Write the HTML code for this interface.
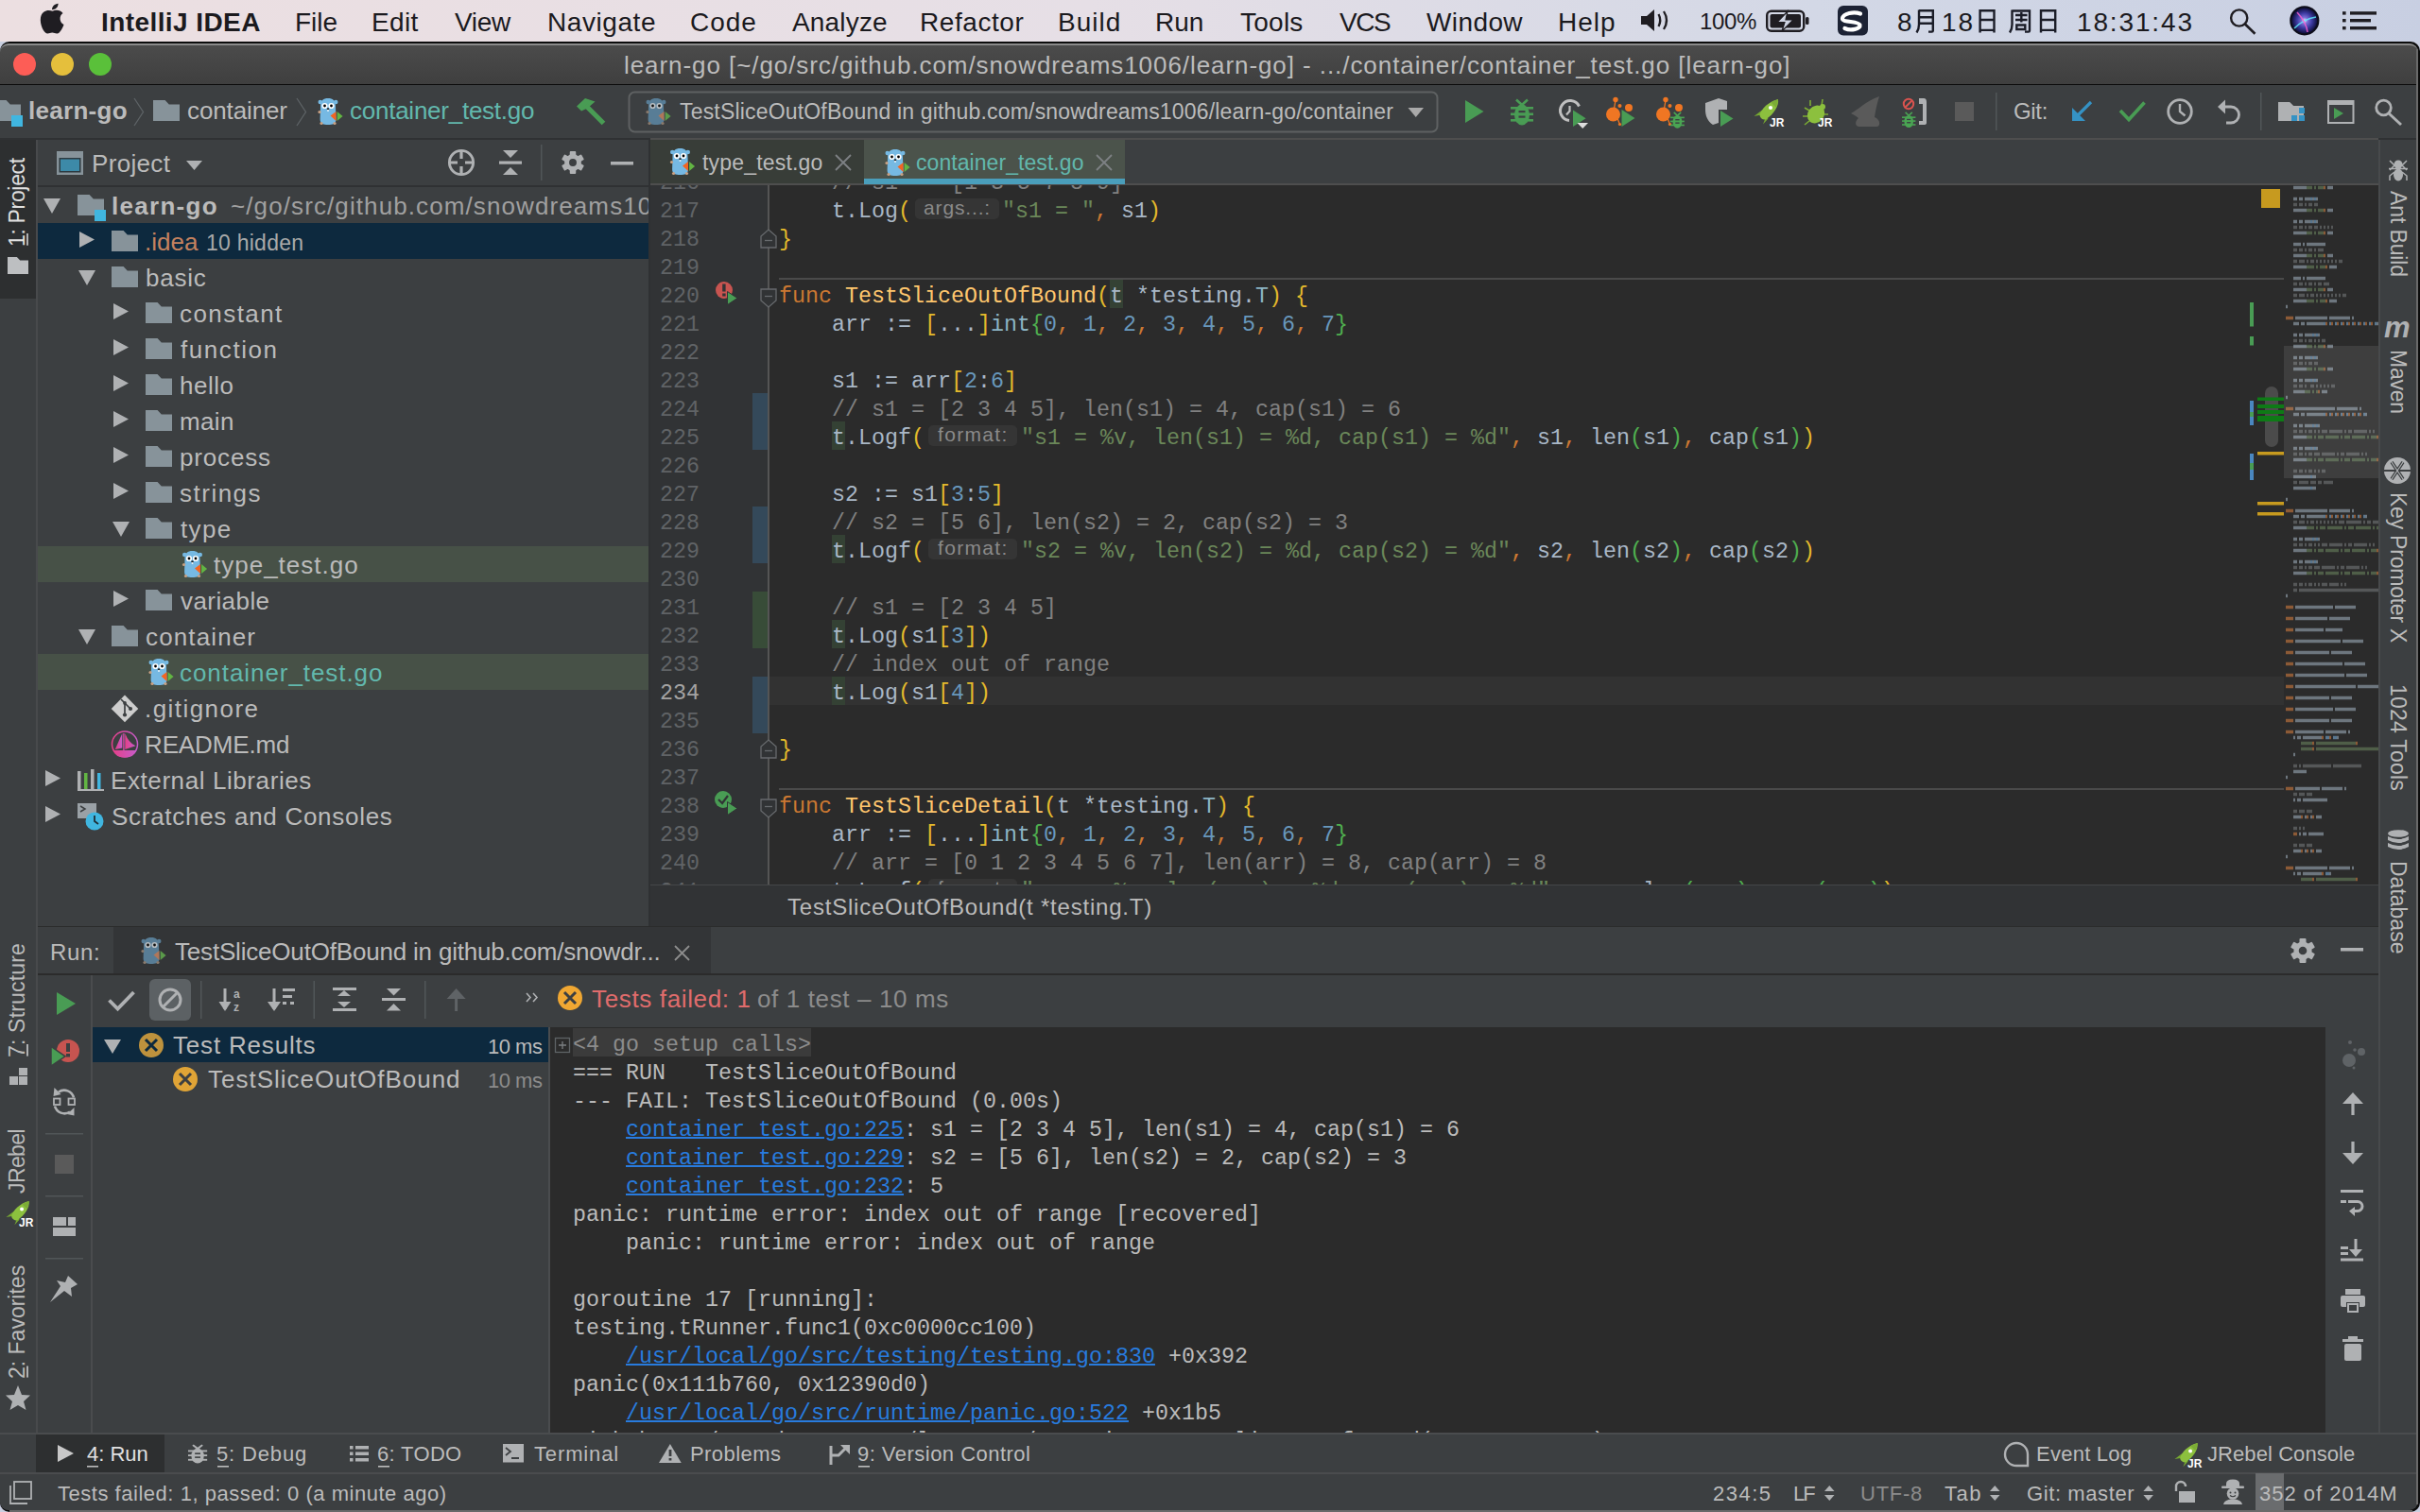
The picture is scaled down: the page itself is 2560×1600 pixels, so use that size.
<!DOCTYPE html><html><head><meta charset="utf-8"><style>
html,body{margin:0;padding:0;background:#c9cfe0;width:2560px;height:1600px;overflow:hidden}
#r{position:relative;width:2560px;height:1600px;overflow:hidden;-webkit-font-smoothing:antialiased}
#r div,#r svg{position:absolute}
</style></head><body><div id="r">
<div style="left:0px;top:0px;width:2560px;height:44px;background:linear-gradient(90deg,#ecdfe1 0%,#e6dfe6 45%,#d3d8e6 75%,#c8cfe2 100%);"></div>
<div style="left:0px;top:44px;width:2560px;height:1556px;background:#0c0c0c;border-radius:10px 10px 10px 10px;"></div>
<div style="left:0px;top:46px;width:2558px;height:1552px;background:#3c3f41;border-radius:9px 9px 9px 9px;"></div>
<div style="left:0px;top:46px;width:2558px;height:43px;background:linear-gradient(#4b4b4b,#3f3f3f);border-radius:9px 9px 0 0;border-top:2px solid #8a8a8a;box-sizing:border-box"></div>
<div style="left:0px;top:89px;width:2558px;height:1px;background:#0b0b0b;"></div>
<div style="left:0px;top:90px;width:2556px;height:56px;background:#3c3f41;"></div>
<div style="left:0px;top:146px;width:2556px;height:2px;background:#2f3133;"></div>
<div style="left:688px;top:146px;width:1828px;height:2px;background:#4e4e4e;"></div>
<div style="left:0px;top:148px;width:38px;height:1368px;background:#3c3f41;"></div>
<div style="left:38px;top:148px;width:2px;height:1368px;background:#484a4c;"></div>
<div style="left:0px;top:148px;width:38px;height:168px;background:#2d2f30;"></div>
<div style="left:40px;top:148px;width:646px;height:832px;background:#3c3f41;"></div>
<div style="left:40px;top:196px;width:646px;height:2px;background:#2f3133;"></div>
<div style="left:688px;top:148px;width:1828px;height:46px;background:#3c3f41;"></div>
<div style="left:688px;top:194px;width:1828px;height:2px;background:#4e4e4e;"></div>
<div style="left:688px;top:196px;width:1728px;height:740px;background:#2b2b2b;"></div>
<div style="left:688px;top:196px;width:124px;height:740px;background:#313335;"></div>
<div style="left:812px;top:196px;width:2px;height:740px;background:#555555;"></div>
<div style="left:2416px;top:196px;width:100px;height:740px;background:#2b2b2b;"></div>
<div style="left:688px;top:936px;width:1828px;height:44px;background:#313335;"></div>
<div style="left:688px;top:936px;width:1828px;height:1px;background:#454749;"></div>
<div style="left:686px;top:148px;width:2px;height:832px;background:#2f3133;"></div>
<div style="left:2516px;top:148px;width:2px;height:1368px;background:#484a4c;"></div>
<div style="left:2518px;top:148px;width:38px;height:1368px;background:#3c3f41;"></div>
<div style="left:40px;top:980px;width:2476px;height:1px;background:#2b2b2b;"></div>
<div style="left:40px;top:981px;width:2476px;height:49px;background:#3c3f41;"></div>
<div style="left:120px;top:981px;width:632px;height:49px;background:#333537;"></div>
<div style="left:40px;top:1030px;width:2476px;height:2px;background:#2b2b2b;"></div>
<div style="left:40px;top:1032px;width:56px;height:484px;background:#3c3f41;"></div>
<div style="left:96px;top:1032px;width:2px;height:484px;background:#4a4c4e;"></div>
<div style="left:98px;top:1032px;width:2418px;height:55px;background:#3c3f41;"></div>
<div style="left:98px;top:1087px;width:482px;height:429px;background:#3c3f41;"></div>
<div style="left:580px;top:1087px;width:2px;height:429px;background:#4a4c4e;"></div>
<div style="left:582px;top:1087px;width:1878px;height:429px;background:#2b2b2b;"></div>
<div style="left:2460px;top:1087px;width:56px;height:429px;background:#3c3f41;"></div>
<div style="left:0px;top:1516px;width:2556px;height:2px;background:#4a4c4e;"></div>
<div style="left:0px;top:1518px;width:2556px;height:40px;background:#3c3f41;"></div>
<div style="left:38px;top:1518px;width:136px;height:40px;background:#2d2f30;"></div>
<div style="left:0px;top:1558px;width:2556px;height:2px;background:#4a4c4e;"></div>
<div style="left:0px;top:1560px;width:2556px;height:38px;background:#3c3f41;border-radius:0 0 9px 9px"></div>
<div style="left:2386px;top:1559px;width:30px;height:39px;background:#6a6c6e;"></div>
<div style="left:2556px;top:52px;width:2px;height:1540px;background:#6a6a6a;"></div>
<div style="left:10px;top:1598px;width:2542px;height:2px;background:#6a6a6a;"></div>
<div style="left:107px;top:10px;font:700 28px/28px 'Liberation Sans';color:#1b1a1e;letter-spacing:0.417px;white-space:pre;">IntelliJ IDEA</div>
<div style="left:312px;top:10px;font:400 28px/28px 'Liberation Sans';color:#1b1a1e;white-space:pre;">File</div>
<div style="left:393px;top:10px;font:400 28px/28px 'Liberation Sans';color:#1b1a1e;letter-spacing:0.333px;white-space:pre;">Edit</div>
<div style="left:481px;top:10px;font:400 28px/28px 'Liberation Sans';color:#1b1a1e;letter-spacing:-0.333px;white-space:pre;">View</div>
<div style="left:579px;top:10px;font:400 28px/28px 'Liberation Sans';color:#1b1a1e;letter-spacing:0.571px;white-space:pre;">Navigate</div>
<div style="left:730px;top:10px;font:400 28px/28px 'Liberation Sans';color:#1b1a1e;letter-spacing:1.000px;white-space:pre;">Code</div>
<div style="left:838px;top:10px;font:400 28px/28px 'Liberation Sans';color:#1b1a1e;letter-spacing:0.167px;white-space:pre;">Analyze</div>
<div style="left:973px;top:10px;font:400 28px/28px 'Liberation Sans';color:#1b1a1e;letter-spacing:0.571px;white-space:pre;">Refactor</div>
<div style="left:1119px;top:10px;font:400 28px/28px 'Liberation Sans';color:#1b1a1e;letter-spacing:1.000px;white-space:pre;">Build</div>
<div style="left:1222px;top:10px;font:400 28px/28px 'Liberation Sans';color:#1b1a1e;white-space:pre;">Run</div>
<div style="left:1312px;top:10px;font:400 28px/28px 'Liberation Sans';color:#1b1a1e;letter-spacing:0.250px;white-space:pre;">Tools</div>
<div style="left:1417px;top:10px;font:400 28px/28px 'Liberation Sans';color:#1b1a1e;letter-spacing:-1.500px;white-space:pre;">VCS</div>
<div style="left:1509px;top:10px;font:400 28px/28px 'Liberation Sans';color:#1b1a1e;letter-spacing:0.400px;white-space:pre;">Window</div>
<div style="left:1648px;top:10px;font:400 28px/28px 'Liberation Sans';color:#1b1a1e;letter-spacing:1.000px;white-space:pre;">Help</div>
<div style="left:2197px;top:10px;font:400 28px/28px 'Liberation Sans';color:#1b1a1e;letter-spacing:1.857px;white-space:pre;">18:31:43</div>
<div style="left:2007px;top:10px;font:400 28px/28px 'Liberation Sans';color:#1b1a1e;white-space:pre;">8</div>
<div style="left:1798px;top:11px;font:400 24px/24px 'Liberation Sans';color:#1b1a1e;letter-spacing:-0.333px;white-space:pre;">100%</div>
<div style="left:2054px;top:10px;font:400 28px/28px 'Liberation Sans';color:#1b1a1e;letter-spacing:2.000px;white-space:pre;">18</div>
<div style="left:660px;top:56px;font:400 26px/26px 'Liberation Sans';color:#bcbcbc;letter-spacing:0.929px;white-space:pre;">learn-go [~/go/src/github.com/snowdreams1006/learn-go] - .../container/container_test.go [learn-go]</div>
<div style="left:30px;top:104px;font:700 26px/26px 'Liberation Sans';color:#bbbbbb;letter-spacing:0.286px;white-space:pre;">learn-go</div>
<div style="left:198px;top:104px;font:400 26px/26px 'Liberation Sans';color:#bbbbbb;letter-spacing:-0.125px;white-space:pre;">container</div>
<div style="left:370px;top:104px;font:400 26px/26px 'Liberation Sans';color:#62b8ad;letter-spacing:-0.250px;white-space:pre;">container_test.go</div>
<div style="left:719px;top:107px;font:400 23px/23px 'Liberation Sans';color:#bbbbbb;letter-spacing:0.182px;white-space:pre;">TestSliceOutOfBound in github.com/snowdreams1006/learn-go/container</div>
<div style="left:2130px;top:106px;font:400 24px/24px 'Liberation Sans';color:#bbbbbb;letter-spacing:-0.333px;white-space:pre;">Git:</div>
<div style="left:97px;top:160px;font:400 26px/26px 'Liberation Sans';color:#bbbbbb;letter-spacing:0.333px;white-space:pre;">Project</div>
<div style="left:40px;top:197px;width:646px;height:783px;overflow:hidden"><div style="left:-40px;top:-197px;width:2560px;height:1600px">
<div style="left:40px;top:236px;width:646px;height:38px;background:#0d293e;"></div>
<div style="left:40px;top:578px;width:646px;height:38px;background:#475147;"></div>
<div style="left:40px;top:692px;width:646px;height:38px;background:#475147;"></div>
<div style="left:118px;top:205px;font:700 26px/26px 'Liberation Sans';color:#bbbbbb;letter-spacing:1.286px;white-space:pre;">learn-go</div>
<div style="left:153px;top:243px;font:400 26px/26px 'Liberation Sans';color:#c5825f;white-space:pre;">.idea</div>
<div style="left:154px;top:281px;font:400 26px/26px 'Liberation Sans';color:#bbbbbb;letter-spacing:0.750px;white-space:pre;">basic</div>
<div style="left:190px;top:319px;font:400 26px/26px 'Liberation Sans';color:#bbbbbb;letter-spacing:1.429px;white-space:pre;">constant</div>
<div style="left:191px;top:357px;font:400 26px/26px 'Liberation Sans';color:#bbbbbb;letter-spacing:1.571px;white-space:pre;">function</div>
<div style="left:190px;top:395px;font:400 26px/26px 'Liberation Sans';color:#bbbbbb;letter-spacing:0.500px;white-space:pre;">hello</div>
<div style="left:190px;top:433px;font:400 26px/26px 'Liberation Sans';color:#bbbbbb;letter-spacing:0.333px;white-space:pre;">main</div>
<div style="left:190px;top:471px;font:400 26px/26px 'Liberation Sans';color:#bbbbbb;letter-spacing:0.833px;white-space:pre;">process</div>
<div style="left:190px;top:509px;font:400 26px/26px 'Liberation Sans';color:#bbbbbb;letter-spacing:1.500px;white-space:pre;">strings</div>
<div style="left:191px;top:547px;font:400 26px/26px 'Liberation Sans';color:#bbbbbb;letter-spacing:1.333px;white-space:pre;">type</div>
<div style="left:226px;top:585px;font:400 26px/26px 'Liberation Sans';color:#bbbbbb;letter-spacing:1.000px;white-space:pre;">type_test.go</div>
<div style="left:191px;top:623px;font:400 26px/26px 'Liberation Sans';color:#bbbbbb;letter-spacing:0.429px;white-space:pre;">variable</div>
<div style="left:154px;top:661px;font:400 26px/26px 'Liberation Sans';color:#bbbbbb;letter-spacing:1.125px;white-space:pre;">container</div>
<div style="left:190px;top:699px;font:400 26px/26px 'Liberation Sans';color:#62b8ad;letter-spacing:0.938px;white-space:pre;">container_test.go</div>
<div style="left:153px;top:737px;font:400 26px/26px 'Liberation Sans';color:#bbbbbb;letter-spacing:1.444px;white-space:pre;">.gitignore</div>
<div style="left:153px;top:775px;font:400 26px/26px 'Liberation Sans';color:#bbbbbb;letter-spacing:-0.125px;white-space:pre;">README.md</div>
<div style="left:117px;top:813px;font:400 26px/26px 'Liberation Sans';color:#bbbbbb;letter-spacing:0.588px;white-space:pre;">External Libraries</div>
<div style="left:118px;top:851px;font:400 26px/26px 'Liberation Sans';color:#bbbbbb;letter-spacing:0.714px;white-space:pre;">Scratches and Consoles</div>
<div style="left:244px;top:205px;font:400 26px/26px 'Liberation Sans';color:#a0a0a0;letter-spacing:1.100px;white-space:pre;">~/go/src/github.com/snowdreams1006/learn-go</div>
<div style="left:218px;top:246px;font:400 23px/23px 'Liberation Sans';color:#a9a9a9;letter-spacing:0.250px;white-space:pre;">10 hidden</div>
</div></div>
<div style="left:688px;top:148px;width:226px;height:46px;background:#383d38;"></div>
<div style="left:914px;top:148px;width:276px;height:46px;background:#4b534b;"></div>
<div style="left:914px;top:189px;width:276px;height:6px;background:#4a9ebb;"></div>
<div style="left:743px;top:161px;font:400 23px/23px 'Liberation Sans';color:#bbbbbb;letter-spacing:0.182px;white-space:pre;">type_test.go</div>
<div style="left:969px;top:161px;font:400 23px/23px 'Liberation Sans';color:#62b8ad;letter-spacing:0.062px;white-space:pre;">container_test.go</div>
<div style="left:833px;top:948px;font:400 24px/24px 'Liberation Sans';color:#bbbbbb;letter-spacing:0.781px;white-space:pre;">TestSliceOutOfBound(t *testing.T)</div>
<div style="left:53px;top:996px;font:400 24px/24px 'Liberation Sans';color:#bbbbbb;letter-spacing:0.667px;white-space:pre;">Run:</div>
<div style="left:185px;top:994px;font:400 26px/26px 'Liberation Sans';color:#bbbbbb;letter-spacing:-0.190px;white-space:pre;">TestSliceOutOfBound in github.com/snowdr...</div>
<div style="left:626px;top:1044px;font:400 26px/26px 'Liberation Sans';color:#e06c6c;letter-spacing:0.643px;white-space:pre;">Tests failed: 1</div>
<div style="left:801px;top:1044px;font:400 26px/26px 'Liberation Sans';color:#8c8c8c;letter-spacing:0.625px;white-space:pre;">of 1 test – 10 ms</div>
<div style="left:98px;top:1087px;width:482px;height:37px;background:#0d293e;"></div>
<div style="left:183px;top:1093px;font:400 26px/26px 'Liberation Sans';color:#bbbbbb;letter-spacing:0.818px;white-space:pre;">Test Results</div>
<div style="left:516px;top:1097px;font:400 22px/22px 'Liberation Sans';color:#bbbbbb;letter-spacing:-0.500px;white-space:pre;">10 ms</div>
<div style="left:220px;top:1129px;font:400 26px/26px 'Liberation Sans';color:#bbbbbb;letter-spacing:1.000px;white-space:pre;">TestSliceOutOfBound</div>
<div style="left:516px;top:1133px;font:400 22px/22px 'Liberation Sans';color:#8c8c8c;letter-spacing:-0.500px;white-space:pre;">10 ms</div>
<div style="left:92px;top:1528px;font:400 22px/22px 'Liberation Sans';color:#e0e0e0;white-space:pre;">4: Run</div>
<div style="left:229px;top:1528px;font:400 22px/22px 'Liberation Sans';color:#bbbbbb;letter-spacing:0.857px;white-space:pre;">5: Debug</div>
<div style="left:399px;top:1528px;font:400 22px/22px 'Liberation Sans';color:#bbbbbb;letter-spacing:0.333px;white-space:pre;">6: TODO</div>
<div style="left:565px;top:1528px;font:400 22px/22px 'Liberation Sans';color:#bbbbbb;letter-spacing:0.857px;white-space:pre;">Terminal</div>
<div style="left:730px;top:1528px;font:400 22px/22px 'Liberation Sans';color:#bbbbbb;letter-spacing:0.429px;white-space:pre;">Problems</div>
<div style="left:907px;top:1528px;font:400 22px/22px 'Liberation Sans';color:#bbbbbb;letter-spacing:0.471px;white-space:pre;">9: Version Control</div>
<div style="left:2154px;top:1528px;font:400 22px/22px 'Liberation Sans';color:#bbbbbb;letter-spacing:0.250px;white-space:pre;">Event Log</div>
<div style="left:2335px;top:1528px;font:400 22px/22px 'Liberation Sans';color:#bbbbbb;letter-spacing:0.077px;white-space:pre;">JRebel Console</div>
<div style="left:61px;top:1570px;font:400 22px/22px 'Liberation Sans';color:#bbbbbb;letter-spacing:0.525px;white-space:pre;">Tests failed: 1, passed: 0 (a minute ago)</div>
<div style="left:1812px;top:1570px;font:400 22px/22px 'Liberation Sans';color:#bbbbbb;letter-spacing:1.500px;white-space:pre;">234:5</div>
<div style="left:1897px;top:1570px;font:400 22px/22px 'Liberation Sans';color:#bbbbbb;letter-spacing:-2.000px;white-space:pre;">LF</div>
<div style="left:1968px;top:1570px;font:400 22px/22px 'Liberation Sans';color:#8c8c8c;letter-spacing:0.750px;white-space:pre;">UTF-8</div>
<div style="left:2057px;top:1570px;font:400 22px/22px 'Liberation Sans';color:#bbbbbb;letter-spacing:1.500px;white-space:pre;">Tab</div>
<div style="left:2144px;top:1570px;font:400 22px/22px 'Liberation Sans';color:#bbbbbb;letter-spacing:0.600px;white-space:pre;">Git: master</div>
<div style="left:2390px;top:1570px;font:400 22px/22px 'Liberation Sans';color:#bbbbbb;letter-spacing:1.000px;white-space:pre;">352 of 2014M</div>
<div style="left:7px;top:261px;font:400 23px/23px 'Liberation Sans';color:#e0e0e0;letter-spacing:-0.333px;white-space:pre;transform-origin:0 0;transform:rotate(-90deg);">1: Project</div>
<div style="left:7px;top:1119px;font:400 23px/23px 'Liberation Sans';color:#bbbbbb;letter-spacing:0.182px;white-space:pre;transform-origin:0 0;transform:rotate(-90deg);">7: Structure</div>
<div style="left:7px;top:1263px;font:400 23px/23px 'Liberation Sans';color:#bbbbbb;letter-spacing:-0.600px;white-space:pre;transform-origin:0 0;transform:rotate(-90deg);">JRebel</div>
<div style="left:7px;top:1459px;font:400 23px/23px 'Liberation Sans';color:#bbbbbb;white-space:pre;transform-origin:0 0;transform:rotate(-90deg);">2: Favorites</div>
<div style="left:2548px;top:202px;font:400 23px/23px 'Liberation Sans';color:#bbbbbb;letter-spacing:-0.125px;white-space:pre;transform-origin:0 0;transform:rotate(90deg);">Ant Build</div>
<div style="left:2548px;top:370px;font:400 23px/23px 'Liberation Sans';color:#bbbbbb;letter-spacing:-0.250px;white-space:pre;transform-origin:0 0;transform:rotate(90deg);">Maven</div>
<div style="left:2548px;top:521px;font:400 23px/23px 'Liberation Sans';color:#bbbbbb;letter-spacing:-0.231px;white-space:pre;transform-origin:0 0;transform:rotate(90deg);">Key Promoter X</div>
<div style="left:2548px;top:724px;font:400 23px/23px 'Liberation Sans';color:#bbbbbb;letter-spacing:0.222px;white-space:pre;transform-origin:0 0;transform:rotate(90deg);">1024 Tools</div>
<div style="left:2548px;top:911px;font:400 23px/23px 'Liberation Sans';color:#bbbbbb;white-space:pre;transform-origin:0 0;transform:rotate(90deg);">Database</div>
<div style="left:686px;top:196px;width:1730px;height:740px;overflow:hidden"><div style="left:-686px;top:-196px;width:2560px;height:1600px">
<div style="left:814px;top:716px;width:1602px;height:30px;background:#323232;"></div>
<div style="left:1174px;top:296px;width:14px;height:30px;background:#344134;"></div>
<div style="left:880px;top:446px;width:14px;height:30px;background:#344134;"></div>
<div style="left:880px;top:566px;width:14px;height:30px;background:#344134;"></div>
<div style="left:880px;top:656px;width:14px;height:30px;background:#344134;"></div>
<div style="left:880px;top:716px;width:14px;height:30px;background:#344134;"></div>
<div style="left:824px;top:294px;width:1592px;height:2px;background:#4a4a4a;"></div>
<div style="left:824px;top:834px;width:1592px;height:2px;background:#4a4a4a;"></div>
<div style="left:824px;top:183px;font:400 23.333px/23.333px 'Liberation Mono';white-space:pre;"><span style="color:#808080">    // s1 =  [1 3 5 7 8 9]</span></div>
<div style="left:824px;top:243px;font:400 23.333px/23.333px 'Liberation Mono';white-space:pre;"><span style="color:#e3b92c">}</span></div>
<div style="left:824px;top:303px;font:400 23.333px/23.333px 'Liberation Mono';white-space:pre;"><span style="color:#cc7832">func</span><span style="color:#a9b7c6"> </span><span style="color:#ffc66d">TestSliceOutOfBound</span><span style="color:#e3b92c">(</span><span style="color:#a9b7c6">t *testing.</span><span style="color:#8cb4c4">T</span><span style="color:#e3b92c">)</span><span style="color:#a9b7c6"> </span><span style="color:#e3b92c">{</span></div>
<div style="left:824px;top:333px;font:400 23.333px/23.333px 'Liberation Mono';white-space:pre;"><span style="color:#a9b7c6">    arr := </span><span style="color:#e3b92c">[</span><span style="color:#a9b7c6">...</span><span style="color:#e3b92c">]</span><span style="color:#8cb4c4">int</span><span style="color:#4fae4f">{</span><span style="color:#6897bb">0</span><span style="color:#cc7832">,</span><span style="color:#a9b7c6"> </span><span style="color:#6897bb">1</span><span style="color:#cc7832">,</span><span style="color:#a9b7c6"> </span><span style="color:#6897bb">2</span><span style="color:#cc7832">,</span><span style="color:#a9b7c6"> </span><span style="color:#6897bb">3</span><span style="color:#cc7832">,</span><span style="color:#a9b7c6"> </span><span style="color:#6897bb">4</span><span style="color:#cc7832">,</span><span style="color:#a9b7c6"> </span><span style="color:#6897bb">5</span><span style="color:#cc7832">,</span><span style="color:#a9b7c6"> </span><span style="color:#6897bb">6</span><span style="color:#cc7832">,</span><span style="color:#a9b7c6"> </span><span style="color:#6897bb">7</span><span style="color:#4fae4f">}</span></div>
<div style="left:824px;top:393px;font:400 23.333px/23.333px 'Liberation Mono';white-space:pre;"><span style="color:#a9b7c6">    s1 := arr</span><span style="color:#e3b92c">[</span><span style="color:#6897bb">2</span><span style="color:#a9b7c6">:</span><span style="color:#6897bb">6</span><span style="color:#e3b92c">]</span></div>
<div style="left:824px;top:423px;font:400 23.333px/23.333px 'Liberation Mono';white-space:pre;"><span style="color:#808080">    // s1 = [2 3 4 5], len(s1) = 4, cap(s1) = 6</span></div>
<div style="left:824px;top:513px;font:400 23.333px/23.333px 'Liberation Mono';white-space:pre;"><span style="color:#a9b7c6">    s2 := s1</span><span style="color:#e3b92c">[</span><span style="color:#6897bb">3</span><span style="color:#a9b7c6">:</span><span style="color:#6897bb">5</span><span style="color:#e3b92c">]</span></div>
<div style="left:824px;top:543px;font:400 23.333px/23.333px 'Liberation Mono';white-space:pre;"><span style="color:#808080">    // s2 = [5 6], len(s2) = 2, cap(s2) = 3</span></div>
<div style="left:824px;top:633px;font:400 23.333px/23.333px 'Liberation Mono';white-space:pre;"><span style="color:#808080">    // s1 = [2 3 4 5]</span></div>
<div style="left:824px;top:663px;font:400 23.333px/23.333px 'Liberation Mono';white-space:pre;"><span style="color:#a9b7c6">    t.Log</span><span style="color:#e3b92c">(</span><span style="color:#a9b7c6">s1</span><span style="color:#e3b92c">[</span><span style="color:#6897bb">3</span><span style="color:#e3b92c">]</span><span style="color:#e3b92c">)</span></div>
<div style="left:824px;top:693px;font:400 23.333px/23.333px 'Liberation Mono';white-space:pre;"><span style="color:#808080">    // index out of range</span></div>
<div style="left:824px;top:723px;font:400 23.333px/23.333px 'Liberation Mono';white-space:pre;"><span style="color:#a9b7c6">    t.Log</span><span style="color:#e3b92c">(</span><span style="color:#a9b7c6">s1</span><span style="color:#e3b92c">[</span><span style="color:#6897bb">4</span><span style="color:#e3b92c">]</span><span style="color:#e3b92c">)</span></div>
<div style="left:824px;top:783px;font:400 23.333px/23.333px 'Liberation Mono';white-space:pre;"><span style="color:#e3b92c">}</span></div>
<div style="left:824px;top:843px;font:400 23.333px/23.333px 'Liberation Mono';white-space:pre;"><span style="color:#cc7832">func</span><span style="color:#a9b7c6"> </span><span style="color:#ffc66d">TestSliceDetail</span><span style="color:#e3b92c">(</span><span style="color:#a9b7c6">t *testing.</span><span style="color:#8cb4c4">T</span><span style="color:#e3b92c">)</span><span style="color:#a9b7c6"> </span><span style="color:#e3b92c">{</span></div>
<div style="left:824px;top:873px;font:400 23.333px/23.333px 'Liberation Mono';white-space:pre;"><span style="color:#a9b7c6">    arr := </span><span style="color:#e3b92c">[</span><span style="color:#a9b7c6">...</span><span style="color:#e3b92c">]</span><span style="color:#8cb4c4">int</span><span style="color:#4fae4f">{</span><span style="color:#6897bb">0</span><span style="color:#cc7832">,</span><span style="color:#a9b7c6"> </span><span style="color:#6897bb">1</span><span style="color:#cc7832">,</span><span style="color:#a9b7c6"> </span><span style="color:#6897bb">2</span><span style="color:#cc7832">,</span><span style="color:#a9b7c6"> </span><span style="color:#6897bb">3</span><span style="color:#cc7832">,</span><span style="color:#a9b7c6"> </span><span style="color:#6897bb">4</span><span style="color:#cc7832">,</span><span style="color:#a9b7c6"> </span><span style="color:#6897bb">5</span><span style="color:#cc7832">,</span><span style="color:#a9b7c6"> </span><span style="color:#6897bb">6</span><span style="color:#cc7832">,</span><span style="color:#a9b7c6"> </span><span style="color:#6897bb">7</span><span style="color:#4fae4f">}</span></div>
<div style="left:824px;top:903px;font:400 23.333px/23.333px 'Liberation Mono';white-space:pre;"><span style="color:#808080">    // arr = [0 1 2 3 4 5 6 7], len(arr) = 8, cap(arr) = 8</span></div>
<div style="left:824px;top:453px;font:400 23.333px/23.333px 'Liberation Mono';white-space:pre;"><span style="color:#a9b7c6">    t.Logf</span><span style="color:#e3b92c">(</span></div>
<div style="left:982px;top:450px;width:94px;height:22px;background:#353535;border-radius:5px"></div>
<div style="left:992px;top:449px;font:400 21px/21px 'Liberation Sans';color:#8a8a8a;letter-spacing:1.333px;white-space:pre;">format:</div>
<div style="left:1080px;top:453px;font:400 23.333px/23.333px 'Liberation Mono';white-space:pre;"><span style="color:#6a8759">&quot;s1 = %v, len(s1) = %d, cap(s1) = %d&quot;</span><span style="color:#cc7832">,</span><span style="color:#a9b7c6"> s1</span><span style="color:#cc7832">,</span><span style="color:#a9b7c6"> len</span><span style="color:#4fae4f">(</span><span style="color:#a9b7c6">s1</span><span style="color:#4fae4f">)</span><span style="color:#cc7832">,</span><span style="color:#a9b7c6"> cap</span><span style="color:#4fae4f">(</span><span style="color:#a9b7c6">s1</span><span style="color:#4fae4f">)</span><span style="color:#e3b92c">)</span></div>
<div style="left:824px;top:573px;font:400 23.333px/23.333px 'Liberation Mono';white-space:pre;"><span style="color:#a9b7c6">    t.Logf</span><span style="color:#e3b92c">(</span></div>
<div style="left:982px;top:570px;width:94px;height:22px;background:#353535;border-radius:5px"></div>
<div style="left:992px;top:569px;font:400 21px/21px 'Liberation Sans';color:#8a8a8a;letter-spacing:1.333px;white-space:pre;">format:</div>
<div style="left:1080px;top:573px;font:400 23.333px/23.333px 'Liberation Mono';white-space:pre;"><span style="color:#6a8759">&quot;s2 = %v, len(s2) = %d, cap(s2) = %d&quot;</span><span style="color:#cc7832">,</span><span style="color:#a9b7c6"> s2</span><span style="color:#cc7832">,</span><span style="color:#a9b7c6"> len</span><span style="color:#4fae4f">(</span><span style="color:#a9b7c6">s2</span><span style="color:#4fae4f">)</span><span style="color:#cc7832">,</span><span style="color:#a9b7c6"> cap</span><span style="color:#4fae4f">(</span><span style="color:#a9b7c6">s2</span><span style="color:#4fae4f">)</span><span style="color:#e3b92c">)</span></div>
<div style="left:824px;top:933px;font:400 23.333px/23.333px 'Liberation Mono';white-space:pre;"><span style="color:#a9b7c6">    t.Logf</span><span style="color:#e3b92c">(</span></div>
<div style="left:982px;top:930px;width:94px;height:22px;background:#353535;border-radius:5px"></div>
<div style="left:992px;top:929px;font:400 21px/21px 'Liberation Sans';color:#8a8a8a;letter-spacing:1.333px;white-space:pre;">format:</div>
<div style="left:1080px;top:933px;font:400 23.333px/23.333px 'Liberation Mono';white-space:pre;"><span style="color:#6a8759">&quot;arr = %v, len(arr) = %d, cap(arr) = %d&quot;</span><span style="color:#cc7832">,</span><span style="color:#a9b7c6"> arr</span><span style="color:#cc7832">,</span><span style="color:#a9b7c6"> len</span><span style="color:#4fae4f">(</span><span style="color:#a9b7c6">arr</span><span style="color:#4fae4f">)</span><span style="color:#cc7832">,</span><span style="color:#a9b7c6"> cap</span><span style="color:#4fae4f">(</span><span style="color:#a9b7c6">arr</span><span style="color:#4fae4f">)</span><span style="color:#e3b92c">)</span></div>
<div style="left:824px;top:213px;font:400 23.333px/23.333px 'Liberation Mono';white-space:pre;"><span style="color:#a9b7c6">    t.Log</span><span style="color:#e3b92c">(</span></div>
<div style="left:968px;top:210px;width:89px;height:22px;background:#353535;border-radius:5px"></div>
<div style="left:977px;top:209px;font:400 21px/21px 'Liberation Sans';color:#8a8a8a;letter-spacing:0.857px;white-space:pre;">args...:</div>
<div style="left:1060px;top:213px;font:400 23.333px/23.333px 'Liberation Mono';white-space:pre;"><span style="color:#6a8759">&quot;s1 = &quot;</span><span style="color:#cc7832">,</span><span style="color:#a9b7c6"> s1</span><span style="color:#e3b92c">)</span></div>
<div style="left:698px;top:183px;font:400 23.333px/23.333px 'Liberation Mono';color:#606366;white-space:pre">216</div>
<div style="left:698px;top:213px;font:400 23.333px/23.333px 'Liberation Mono';color:#606366;white-space:pre">217</div>
<div style="left:698px;top:243px;font:400 23.333px/23.333px 'Liberation Mono';color:#606366;white-space:pre">218</div>
<div style="left:698px;top:273px;font:400 23.333px/23.333px 'Liberation Mono';color:#606366;white-space:pre">219</div>
<div style="left:698px;top:303px;font:400 23.333px/23.333px 'Liberation Mono';color:#606366;white-space:pre">220</div>
<div style="left:698px;top:333px;font:400 23.333px/23.333px 'Liberation Mono';color:#606366;white-space:pre">221</div>
<div style="left:698px;top:363px;font:400 23.333px/23.333px 'Liberation Mono';color:#606366;white-space:pre">222</div>
<div style="left:698px;top:393px;font:400 23.333px/23.333px 'Liberation Mono';color:#606366;white-space:pre">223</div>
<div style="left:698px;top:423px;font:400 23.333px/23.333px 'Liberation Mono';color:#606366;white-space:pre">224</div>
<div style="left:698px;top:453px;font:400 23.333px/23.333px 'Liberation Mono';color:#606366;white-space:pre">225</div>
<div style="left:698px;top:483px;font:400 23.333px/23.333px 'Liberation Mono';color:#606366;white-space:pre">226</div>
<div style="left:698px;top:513px;font:400 23.333px/23.333px 'Liberation Mono';color:#606366;white-space:pre">227</div>
<div style="left:698px;top:543px;font:400 23.333px/23.333px 'Liberation Mono';color:#606366;white-space:pre">228</div>
<div style="left:698px;top:573px;font:400 23.333px/23.333px 'Liberation Mono';color:#606366;white-space:pre">229</div>
<div style="left:698px;top:603px;font:400 23.333px/23.333px 'Liberation Mono';color:#606366;white-space:pre">230</div>
<div style="left:698px;top:633px;font:400 23.333px/23.333px 'Liberation Mono';color:#606366;white-space:pre">231</div>
<div style="left:698px;top:663px;font:400 23.333px/23.333px 'Liberation Mono';color:#606366;white-space:pre">232</div>
<div style="left:698px;top:693px;font:400 23.333px/23.333px 'Liberation Mono';color:#606366;white-space:pre">233</div>
<div style="left:698px;top:723px;font:400 23.333px/23.333px 'Liberation Mono';color:#a4a3a3;white-space:pre">234</div>
<div style="left:698px;top:753px;font:400 23.333px/23.333px 'Liberation Mono';color:#606366;white-space:pre">235</div>
<div style="left:698px;top:783px;font:400 23.333px/23.333px 'Liberation Mono';color:#606366;white-space:pre">236</div>
<div style="left:698px;top:813px;font:400 23.333px/23.333px 'Liberation Mono';color:#606366;white-space:pre">237</div>
<div style="left:698px;top:843px;font:400 23.333px/23.333px 'Liberation Mono';color:#606366;white-space:pre">238</div>
<div style="left:698px;top:873px;font:400 23.333px/23.333px 'Liberation Mono';color:#606366;white-space:pre">239</div>
<div style="left:698px;top:903px;font:400 23.333px/23.333px 'Liberation Mono';color:#606366;white-space:pre">240</div>
<div style="left:698px;top:933px;font:400 23.333px/23.333px 'Liberation Mono';color:#606366;white-space:pre">241</div>
<div style="left:796px;top:416px;width:16px;height:60px;background:#34495a;"></div>
<div style="left:796px;top:536px;width:16px;height:60px;background:#34495a;"></div>
<div style="left:796px;top:626px;width:16px;height:60px;background:#384c38;"></div>
<div style="left:796px;top:716px;width:16px;height:60px;background:#34495a;"></div>
</div></div>
<div style="left:582px;top:1087px;width:1878px;height:429px;overflow:hidden"><div style="left:-582px;top:-1087px;width:2560px;height:1600px">
<div style="left:606px;top:1088px;width:252px;height:30px;background:#3b3b3b;"></div>
<div style="left:606px;top:1095px;font:400 23.333px/23.333px 'Liberation Mono';white-space:pre"><span style="color:#8c8c8c">&lt;4 go setup calls&gt;</span></div>
<div style="left:606px;top:1125px;font:400 23.333px/23.333px 'Liberation Mono';white-space:pre"><span style="color:#bbbbbb">=== RUN   TestSliceOutOfBound</span></div>
<div style="left:606px;top:1155px;font:400 23.333px/23.333px 'Liberation Mono';white-space:pre"><span style="color:#bbbbbb">--- FAIL: TestSliceOutOfBound (0.00s)</span></div>
<div style="left:606px;top:1185px;font:400 23.333px/23.333px 'Liberation Mono';white-space:pre"><span style="color:#bbbbbb">    </span><span style="color:#287bde;text-decoration:underline;text-underline-offset:1px">container_test.go:225</span><span style="color:#bbbbbb">: s1 = [2 3 4 5], len(s1) = 4, cap(s1) = 6</span></div>
<div style="left:606px;top:1215px;font:400 23.333px/23.333px 'Liberation Mono';white-space:pre"><span style="color:#bbbbbb">    </span><span style="color:#287bde;text-decoration:underline;text-underline-offset:1px">container_test.go:229</span><span style="color:#bbbbbb">: s2 = [5 6], len(s2) = 2, cap(s2) = 3</span></div>
<div style="left:606px;top:1245px;font:400 23.333px/23.333px 'Liberation Mono';white-space:pre"><span style="color:#bbbbbb">    </span><span style="color:#287bde;text-decoration:underline;text-underline-offset:1px">container_test.go:232</span><span style="color:#bbbbbb">: 5</span></div>
<div style="left:606px;top:1275px;font:400 23.333px/23.333px 'Liberation Mono';white-space:pre"><span style="color:#bbbbbb">panic: runtime error: index out of range [recovered]</span></div>
<div style="left:606px;top:1305px;font:400 23.333px/23.333px 'Liberation Mono';white-space:pre"><span style="color:#bbbbbb">    panic: runtime error: index out of range</span></div>
<div style="left:606px;top:1365px;font:400 23.333px/23.333px 'Liberation Mono';white-space:pre"><span style="color:#bbbbbb">goroutine 17 [running]:</span></div>
<div style="left:606px;top:1395px;font:400 23.333px/23.333px 'Liberation Mono';white-space:pre"><span style="color:#bbbbbb">testing.tRunner.func1(0xc0000cc100)</span></div>
<div style="left:606px;top:1425px;font:400 23.333px/23.333px 'Liberation Mono';white-space:pre"><span style="color:#bbbbbb">    </span><span style="color:#287bde;text-decoration:underline;text-underline-offset:1px">/usr/local/go/src/testing/testing.go:830</span><span style="color:#bbbbbb"> +0x392</span></div>
<div style="left:606px;top:1455px;font:400 23.333px/23.333px 'Liberation Mono';white-space:pre"><span style="color:#bbbbbb">panic(0x111b760, 0x12390d0)</span></div>
<div style="left:606px;top:1485px;font:400 23.333px/23.333px 'Liberation Mono';white-space:pre"><span style="color:#bbbbbb">    </span><span style="color:#287bde;text-decoration:underline;text-underline-offset:1px">/usr/local/go/src/runtime/panic.go:522</span><span style="color:#bbbbbb"> +0x1b5</span></div>
<div style="left:606px;top:1515px;font:400 23.333px/23.333px 'Liberation Mono';white-space:pre"><span style="color:#bbbbbb">github.com/snowdreams1006/learn-go/container.TestSliceOutOfBound(0xc0000cc100)</span></div>
</div></div>
<svg style="left:0;top:0" width="2560" height="1600" viewBox="0 0 2560 1600"><defs>
<g id="gopher">
 <circle cx="9.8" cy="12" r="2.3" fill="#76b9e3"/><circle cx="26.2" cy="12" r="2.3" fill="#76b9e3"/>
 <path d="M10 17 C10 10 13 8 18 8 C23 8 26 10 26 17 L26.5 30 C26.5 35 23 36 18 36 C13 36 9.6 35 9.6 30 Z" fill="#76b9e3"/>
 <circle cx="9" cy="22.5" r="1.6" fill="#c9a183"/><circle cx="11" cy="34.5" r="1.6" fill="#c9a183"/><circle cx="25" cy="34.5" r="1.6" fill="#c9a183"/>
 <circle cx="14.5" cy="16" r="3.1" fill="#fff"/><circle cx="21.5" cy="16" r="3.1" fill="#fff"/>
 <circle cx="14.5" cy="16" r="1.4" fill="#000"/><circle cx="21.5" cy="16" r="1.4" fill="#000"/>
 <ellipse cx="18" cy="19.2" rx="1.3" ry="1" fill="#222"/><rect x="17.2" y="20.2" width="1.6" height="1.6" fill="#fff"/>
 <polygon points="20.5,26.5 26.5,22 26.5,32" fill="#f26522"/><polygon points="27.6,22 27.6,32 33.6,27" fill="#62b543"/>
</g>
<g id="gopherm">
 <circle cx="9.8" cy="12" r="2.3" fill="#587d96"/><circle cx="26.2" cy="12" r="2.3" fill="#587d96"/>
 <path d="M10 17 C10 10 13 8 18 8 C23 8 26 10 26 17 L26.5 30 C26.5 35 23 36 18 36 C13 36 9.6 35 9.6 30 Z" fill="#587d96"/>
 <circle cx="9" cy="22.5" r="1.6" fill="#8a7a6c"/><circle cx="11" cy="34.5" r="1.6" fill="#8a7a6c"/><circle cx="25" cy="34.5" r="1.6" fill="#8a7a6c"/>
 <circle cx="14.5" cy="16" r="3.1" fill="#b8bec2"/><circle cx="21.5" cy="16" r="3.1" fill="#b8bec2"/>
 <circle cx="14.5" cy="16" r="1.4" fill="#111"/><circle cx="21.5" cy="16" r="1.4" fill="#111"/>
 <polygon points="20.5,26.5 26.5,22 26.5,32" fill="#b0775a"/><polygon points="27.6,22 27.6,32 33.6,27" fill="#5a9a4a"/>
</g>
<g id="bug">
 <path d="M6 1.5 L12 7 L18 1.5" stroke="currentColor" stroke-width="2.6" fill="none"/>
 <ellipse cx="12" cy="17.5" rx="8" ry="11" fill="currentColor"/>
 <rect x="0" y="9" width="24" height="2.6" fill="currentColor"/><rect x="0" y="15.5" width="24" height="2.6" fill="currentColor"/><rect x="0" y="22" width="24" height="2.6" fill="currentColor"/>
 <rect x="8.5" y="13" width="7" height="2.2" fill="#3c3f41"/><rect x="8.5" y="18.5" width="7" height="2.2" fill="#3c3f41"/>
</g>
<g id="rocket">
 <path d="M10 12.5 L1.5 19 L9.5 17.5 Z" fill="#76a832"/><path d="M14 19.5 L11 27.5 L16.5 21.5 Z" fill="#76a832"/>
 <path d="M27 1 C28 8 22.5 16.5 14.5 22 C11.5 23.5 8 21.5 7.5 18 C9 11 17 3.5 27 1 Z" fill="#8cc03e"/>
 <path d="M27 1 C24.5 1.8 21.5 3 19.5 4.5 L24.5 9.5 C26 7 27 4 27 1 Z" fill="#7cac36"/>
 <circle cx="19" cy="10" r="2.1" fill="#fff"/>
</g>
</defs><path d="M55.5 11.8 C52 10 44.5 10.2 43 18.5 C41.8 26 46.5 35 50 35.5 C52.3 35.6 53 34.6 55.2 34.6 C57.5 34.6 58.2 35.6 60.5 35.5 C63.5 35.2 66.3 29.5 67.5 26 C63 24 62 17 66.5 14 C64 10.5 59 10 55.5 11.8 Z M55 10.3 C55 7 57.8 4 61.6 3.8 C61.6 7.4 59 10.3 55 10.3 Z" fill="#1f1d22"/><path d="M1736 17 H1742 L1750 10 V33 L1742 26 H1736 Z" fill="#1f1d22"/><path d="M1754.5 15 Q1758 21.5 1754.5 28" stroke="#1f1d22" stroke-width="2.3" fill="none"/><path d="M1760 12 Q1766 21.5 1760 31" stroke="#1f1d22" stroke-width="2.3" fill="none"/><rect x="1869.2" y="11.7" width="39" height="21" rx="4.5" fill="none" stroke="#1f1d22" stroke-width="2.4"/><rect x="1910" y="18" width="3.5" height="8" rx="1.5" fill="#1f1d22"/><rect x="1872.5" y="15" width="32.5" height="14.5" rx="2" fill="#1f1d22"/><path d="M1891 12 L1880 23.5 H1888 L1885 33 L1897 21 H1889 Z" fill="#cfd4e3" stroke="#1f1d22" stroke-width="1.2"/><rect x="1944" y="6" width="32" height="31.5" rx="6" fill="#1c2234"/><path d="M1968 14.5 C1961 12 1950 14 1949 19.5 C1948.5 24 1966 22 1967.5 26.5 C1968.5 30.5 1958 33 1951.5 30" stroke="#fff" stroke-width="4.2" fill="none" stroke-linecap="round"/><path d="M2030 10.5 V26 Q2030 31 2027.5 34.5 M2030 11.2 H2044.8 V32.5 Q2044.8 33.6 2043.5 33.6 H2040 M2030 18.3 H2044.8 M2030 24.8 H2044.8" stroke="#1b1d28" stroke-width="2.4" fill="none"/><path d="M2094.6 10 V34.6 M2109.5 10 V34.6 M2094.6 11.2 H2109.5 M2094.6 21 H2109.5 M2094.6 31.9 H2109.5" stroke="#1b1d28" stroke-width="2.4" fill="none"/><path d="M2128.5 10.5 V26 Q2128.5 31 2126 34.5 M2128.5 11.5 H2147 V32.5 Q2147 33.6 2145.7 33.6 H2142 M2132 16 H2144.5 M2138.3 13 V23.5 M2132 21 H2144.5 M2133.3 26.5 H2142.3 V31 H2133.3 Z" stroke="#1b1d28" stroke-width="2.4" fill="none"/><path d="M2159 10 V34.6 M2174.2 10 V34.6 M2159 11.2 H2174.2 M2159 21 H2174.2 M2159 31.9 H2174.2" stroke="#1b1d28" stroke-width="2.4" fill="none"/><circle cx="2368.7" cy="19" r="8.6" fill="none" stroke="#1f1d22" stroke-width="2.4"/><path d="M2374.7 25.3 L2385.5 35.8" stroke="#1f1d22" stroke-width="2.6"/><defs><radialGradient id="siri" cx="50%" cy="50%" r="50%"><stop offset="0" stop-color="#dfe8ff"/><stop offset="0.25" stop-color="#7b6fd6"/><stop offset="0.6" stop-color="#3c3aa0"/><stop offset="1" stop-color="#101040"/></radialGradient></defs><circle cx="2437.8" cy="21.8" r="15.6" fill="#0d0d1a"/><circle cx="2437.8" cy="21.8" r="13.4" fill="url(#siri)"/><path d="M2427 30 Q2437 20 2450 18" stroke="#5ff0ff" stroke-width="1.6" fill="none" opacity="0.8"/><path d="M2430 13 Q2440 24 2441 34" stroke="#ff5fd0" stroke-width="1.6" fill="none" opacity="0.8"/><rect x="2478" y="12.2" width="3.6" height="3.4" fill="#1f1d22"/><rect x="2478" y="20" width="3.6" height="3.4" fill="#1f1d22"/><rect x="2478" y="28" width="3.6" height="3.4" fill="#1f1d22"/><rect x="2486" y="12.2" width="28" height="3.4" fill="#1f1d22"/><rect x="2486" y="20" width="22" height="3.4" fill="#1f1d22"/><rect x="2486" y="28" width="28" height="3.4" fill="#1f1d22"/><circle cx="26" cy="68" r="12" fill="#fd5d56"/><circle cx="66" cy="68" r="12" fill="#e5bf3c"/><circle cx="106" cy="68" r="12" fill="#5ac03a"/><path d="M-6 106 H6.6 L10.8 110.4 H22 V128 H-6 Z" fill="#87939a"/><rect x="12" y="122" width="12" height="12" fill="#40b6e0"/><path d="M142 104 L151.5 118.5 L142 133" stroke="#5e6366" stroke-width="1.3" fill="none"/><path d="M314 104 L323.5 118.5 L314 133" stroke="#5e6366" stroke-width="1.3" fill="none"/><path d="M162 106 H174.6 L178.8 110.4 H190 V128 H162 Z" fill="#87939a"/><use href="#gopher" x="329" y="96" /><polygon points="610,112.5 619,104 629.5,107.5 621.5,114.5 615,117.5" fill="#499c54"/><path d="M619.5 111.5 L638.5 130.5" stroke="#499c54" stroke-width="5.2"/><rect x="665.5" y="97.5" width="855" height="42" rx="6" fill="none" stroke="#5e6162" stroke-width="2"/><use href="#gopherm" x="676" y="96" /><polygon points="1489.5,114 1506.0,114 1497.75,124" fill="#a9a9a9"/><polygon points="1550,106 1550,130 1569.5,118" fill="#499c54"/><g transform="translate(1598,104) scale(1,1.0)" color="#499c54"><use href="#bug"/></g><path d="M1670.5 112.5 A10.5 10.5 0 1 0 1660 127.5" stroke="#bfbfbf" stroke-width="3" fill="none"/><path d="M1660.5 112 V117.5 L1657 121.5" stroke="#bfbfbf" stroke-width="2.2" fill="none"/><polygon points="1664,116.5 1664,134 1677.6,125.2" fill="#499c54"/><polygon points="1668.5,130 1680,130 1674.2,136" fill="#dddddd"/><circle cx="1706.5" cy="121" r="7.5" fill="#f07623"/><circle cx="1709.0" cy="105.5" r="2.7" fill="#f07623"/><path d="M1709.0 106 L1707.5 115" stroke="#f07623" stroke-width="1.3"/><circle cx="1713.5" cy="112" r="2" fill="#f07623"/><circle cx="1723.0" cy="114" r="4" fill="#f07623"/><path d="M1710.5 124 L1713.5 131.5" stroke="#f07623" stroke-width="1.3"/><circle cx="1713.5" cy="131.5" r="1.6" fill="#f07623"/><polygon points="1715.5,116 1715.5,134 1729.5,125" fill="#499c54"/><circle cx="1759.5" cy="121" r="7.5" fill="#f07623"/><circle cx="1762.0" cy="105.5" r="2.7" fill="#f07623"/><path d="M1762.0 106 L1760.5 115" stroke="#f07623" stroke-width="1.3"/><circle cx="1766.5" cy="112" r="2" fill="#f07623"/><circle cx="1776.0" cy="114" r="4" fill="#f07623"/><path d="M1763.5 124 L1766.5 131.5" stroke="#f07623" stroke-width="1.3"/><circle cx="1766.5" cy="131.5" r="1.6" fill="#f07623"/><g transform="translate(1767,118) scale(0.62)" color="#4aa553"><use href="#bug"/></g><path d="M1804 109 L1818 104 L1827 107 L1827 116 L1818 116 L1818 130 L1812 132 C1806 128 1804 122 1804 116 Z" fill="#afb1b3"/><polygon points="1820,117 1820,134 1833.5,125.5" fill="#499c54"/><g transform="translate(1854,104)"><use href="#rocket"/></g><text x="1872" y="133.5" font-family="Liberation Sans" font-weight="700" font-size="12" fill="#fff">JR</text><g transform="translate(1906,104)"><path d="M9 2 L9 8 M3 10 L8 13 M1 19 L6 19 M3 28 L8 24 M22 1 L21 8 M28 17 L22 17" stroke="#7cac33" stroke-width="1.6"/><ellipse cx="15" cy="17" rx="8.5" ry="10" transform="rotate(40 15 17)" fill="#8cc03e"/><circle cx="22" cy="9" r="3" fill="#8cc03e"/></g><text x="1923" y="133.5" font-family="Liberation Sans" font-weight="700" font-size="12" fill="#fff">JR</text><path d="M1958 120 C1966 116 1972 108 1988 102 C1985 112 1984 118 1983 124 C1989 126 1990 134 1985 134 H1967 C1962 134 1962 128 1966 125 C1962 122 1960 121 1958 120 Z" fill="#5a5a5a"/><circle cx="2019" cy="110" r="5.2" fill="none" stroke="#d9534f" stroke-width="2"/><path d="M2015.5 113.5 L2022.5 106.5" stroke="#d9534f" stroke-width="2"/><g transform="translate(2012,118) scale(0.6)" color="#4aa553"><use href="#bug"/></g><path d="M2030 104 H2035 Q2038 104 2038 108 V130 Q2038 132 2035 132 H2030 V128 H2034 V110 H2030 Z" fill="#afb1b3"/><rect x="2068" y="108" width="20" height="20" fill="#5a5a5a"/><rect x="2111" y="98" width="1.5" height="40" fill="#515658"/><path d="M2212 108 L2197 123" stroke="#3592c4" stroke-width="3.2"/><polygon points="2192,128 2192,114 2206,128" fill="#3592c4"/><path d="M2243 117 L2252 126.5 L2268.5 108.5" stroke="#499c54" stroke-width="3.6" fill="none"/><circle cx="2306" cy="118" r="12.3" fill="none" stroke="#afb1b3" stroke-width="2.8"/><path d="M2306 110 V118 L2311.5 122.5" stroke="#afb1b3" stroke-width="2.4" fill="none"/><path d="M2351 113 H2360 A8.5 8.5 0 0 1 2360 130 H2355" stroke="#afb1b3" stroke-width="2.8" fill="none"/><polygon points="2346,113 2354,105.5 2354,120.5" fill="#afb1b3"/><rect x="2391" y="98" width="1.5" height="40" fill="#515658"/><path d="M2410 108 H2422.15 L2426.2 112.0 H2437 V128 H2410 Z" fill="#afb1b3"/><rect x="2424" y="122" width="6" height="6" fill="#3592c4"/><rect x="2432" y="122" width="6" height="6" fill="#3592c4"/><rect x="2432" y="114" width="6" height="6" fill="#3592c4"/><rect x="2463" y="107" width="26.5" height="23" fill="none" stroke="#afb1b3" stroke-width="2"/><rect x="2463" y="107" width="26.5" height="4" fill="#afb1b3"/><polygon points="2469,114 2469,126 2479,120" fill="#499c54"/><circle cx="2521.5" cy="114" r="7.8" fill="none" stroke="#afb1b3" stroke-width="2.8"/><path d="M2527 120 L2540 132" stroke="#afb1b3" stroke-width="3"/><rect x="60" y="160" width="28" height="25" fill="#87939a"/><rect x="62.5" y="167" width="23" height="15.5" fill="#2d3a40"/><rect x="64" y="168.5" width="20" height="12.5" fill="#3d8aa8"/><polygon points="197,170 214,170 205.5,180" fill="#afb1b3"/><circle cx="488" cy="172" r="12.6" fill="none" stroke="#afb1b3" stroke-width="2.9"/><path d="M488 160 V168 M488 176 V184 M476 172 H484 M492 172 H500" stroke="#afb1b3" stroke-width="3.2"/><polygon points="532,159 548,159 540,167" fill="#afb1b3"/><rect x="528" y="170.5" width="24" height="3.2" fill="#afb1b3"/><polygon points="532,185 548,185 540,177" fill="#afb1b3"/><rect x="572" y="153" width="1.5" height="38" fill="#515658"/><rect x="602.76" y="160" width="6.48" height="7.199999999999999" rx="1" transform="rotate(0 606 172)" fill="#afb1b3"/><rect x="602.76" y="160" width="6.48" height="7.199999999999999" rx="1" transform="rotate(60 606 172)" fill="#afb1b3"/><rect x="602.76" y="160" width="6.48" height="7.199999999999999" rx="1" transform="rotate(120 606 172)" fill="#afb1b3"/><rect x="602.76" y="160" width="6.48" height="7.199999999999999" rx="1" transform="rotate(180 606 172)" fill="#afb1b3"/><rect x="602.76" y="160" width="6.48" height="7.199999999999999" rx="1" transform="rotate(240 606 172)" fill="#afb1b3"/><rect x="602.76" y="160" width="6.48" height="7.199999999999999" rx="1" transform="rotate(300 606 172)" fill="#afb1b3"/><circle cx="606" cy="172" r="8.879999999999999" fill="#afb1b3"/><circle cx="606" cy="172" r="3.96" fill="#3c3f41"/><rect x="646" y="171" width="24" height="3.5" fill="#afb1b3"/><polygon points="46,210 64,210 55.0,226" fill="#afb1b3"/><path d="M82 206 H94.6 L98.8 210.4 H110 V228 H82 Z" fill="#87939a"/><rect x="100" y="222" width="12" height="12" fill="#40b6e0"/><polygon points="84,245 84,262 100,253.5" fill="#afb1b3"/><path d="M118 244 H130.6 L134.8 248.4 H146 V266 H118 Z" fill="#87939a"/><polygon points="83,286 101,286 92.0,302" fill="#afb1b3"/><path d="M118 282 H130.6 L134.8 286.4 H146 V304 H118 Z" fill="#87939a"/><polygon points="120,321 120,338 136,329.5" fill="#afb1b3"/><path d="M154 320 H166.6 L170.8 324.4 H182 V342 H154 Z" fill="#87939a"/><polygon points="120,359 120,376 136,367.5" fill="#afb1b3"/><path d="M154 358 H166.6 L170.8 362.4 H182 V380 H154 Z" fill="#87939a"/><polygon points="120,397 120,414 136,405.5" fill="#afb1b3"/><path d="M154 396 H166.6 L170.8 400.4 H182 V418 H154 Z" fill="#87939a"/><polygon points="120,435 120,452 136,443.5" fill="#afb1b3"/><path d="M154 434 H166.6 L170.8 438.4 H182 V456 H154 Z" fill="#87939a"/><polygon points="120,473 120,490 136,481.5" fill="#afb1b3"/><path d="M154 472 H166.6 L170.8 476.4 H182 V494 H154 Z" fill="#87939a"/><polygon points="120,511 120,528 136,519.5" fill="#afb1b3"/><path d="M154 510 H166.6 L170.8 514.4 H182 V532 H154 Z" fill="#87939a"/><polygon points="120,625 120,642 136,633.5" fill="#afb1b3"/><path d="M154 624 H166.6 L170.8 628.4 H182 V646 H154 Z" fill="#87939a"/><polygon points="119,552 137,552 128.0,568" fill="#afb1b3"/><path d="M154 548 H166.6 L170.8 552.4 H182 V570 H154 Z" fill="#87939a"/><use href="#gopher" x="185.5" y="575" /><polygon points="83,666 101,666 92.0,682" fill="#afb1b3"/><path d="M118 662 H130.6 L134.8 666.4 H146 V684 H118 Z" fill="#87939a"/><use href="#gopher" x="150" y="689" /><polygon points="132,735.6 146.3,749.9 132,764.2 117.7,749.9" fill="#cdcdcd"/><path d="M128 740 L132 744 V756.5 M132 744 L138 750" stroke="#3c3f41" stroke-width="1.7" fill="none"/><circle cx="132" cy="744" r="1.9" fill="#3c3f41"/><circle cx="132" cy="756.5" r="2.1" fill="#3c3f41"/><circle cx="138" cy="750" r="2.1" fill="#3c3f41"/><defs><linearGradient id="pk" x1="0" x2="1"><stop offset="0" stop-color="#e4408a"/><stop offset="1" stop-color="#c75cc9"/></linearGradient></defs><circle cx="132" cy="787.5" r="13.5" fill="none" stroke="url(#pk)" stroke-width="1.5"/><path d="M119.5 794 H144.5 Q142 801.5 132 801.5 Q122 801.5 119.5 794 Z" fill="url(#pk)"/><polygon points="129.3,776 121.8,793 129.3,791.5" fill="url(#pk)"/><path d="M132.3 776 Q136 786 143.5 789.3 L132.3 793 Z" fill="url(#pk)"/><rect x="130.2" y="776" width="1.3" height="18" fill="url(#pk)"/><polygon points="48,815 48,832 64,823.5" fill="#afb1b3"/><rect x="82" y="816" width="3.5" height="20" fill="#afb1b3"/><rect x="89" y="818" width="3.5" height="18" fill="#62b543"/><rect x="96" y="814" width="3.5" height="22" fill="#afb1b3"/><rect x="103" y="818" width="3.5" height="18" fill="#40b6e0"/><rect x="82" y="835" width="28" height="2" fill="#afb1b3"/><polygon points="48,853 48,870 64,861.5" fill="#afb1b3"/><rect x="82" y="850" width="20" height="16" fill="#9aa1a6"/><path d="M85 853 L90 856 L85 859" stroke="#3c3f41" stroke-width="1.5" fill="none"/><circle cx="100" cy="869" r="9.5" fill="#40b6e0"/><path d="M100 863 V869 L104 872" stroke="#1f2e36" stroke-width="1.8" fill="none"/><use href="#gopher" x="701.5" y="149" /><path d="M884 164 L900 180 M900 164 L884 180" stroke="#7d8184" stroke-width="1.8"/><use href="#gopher" x="929" y="150" /><path d="M1160 164 L1176 180 M1176 164 L1160 180" stroke="#7d8184" stroke-width="1.8"/><circle cx="766" cy="307" r="9" fill="#c75450"/><rect x="764.2" y="300.5" width="3.4" height="8" fill="#313335"/><rect x="764.2" y="310.5" width="3.4" height="3" fill="#313335"/><polygon points="769.5,308.5 769.5,322.5 780,315.5" fill="#499c54" stroke="#313335" stroke-width="1"/><circle cx="765" cy="846" r="9" fill="#499c54"/><path d="M760 846 L764 850 L770 842" stroke="#313335" stroke-width="2.2" fill="none"/><polygon points="769.5,848.5 769.5,862.5 780,855.5" fill="#499c54" stroke="#313335" stroke-width="1"/><polygon points="813,243 821,250 821,262 805,262 805,250" fill="#313335" stroke="#676a6d" stroke-width="1.3"/><path d="M809 254.5 H817" stroke="#676a6d" stroke-width="1.3"/><polygon points="805,306 821,306 821,318 813,325 805,318" fill="#313335" stroke="#676a6d" stroke-width="1.3"/><path d="M809 313.5 H817" stroke="#676a6d" stroke-width="1.3"/><polygon points="813,783 821,790 821,802 805,802 805,790" fill="#313335" stroke="#676a6d" stroke-width="1.3"/><path d="M809 794.5 H817" stroke="#676a6d" stroke-width="1.3"/><polygon points="805,846 821,846 821,858 813,865 805,858" fill="#313335" stroke="#676a6d" stroke-width="1.3"/><path d="M809 853.5 H817" stroke="#676a6d" stroke-width="1.3"/><rect x="2392" y="200" width="20" height="20" fill="#c79a1f"/><rect x="2380" y="320" width="4" height="25.5" fill="#499c54"/><rect x="2380" y="356" width="4" height="9.5" fill="#499c54"/><rect x="2380" y="424" width="4" height="26" fill="#4a87c0"/><rect x="2380" y="436" width="4" height="5" fill="#499c54"/><rect x="2380" y="480" width="4" height="28" fill="#4a87c0"/><rect x="2380" y="490" width="4" height="7" fill="#499c54"/><rect x="2396" y="409" width="14" height="64" rx="7" fill="#4b4b4b"/><rect x="2388" y="420.5" width="28" height="3.5" fill="#0e7a16"/><rect x="2388" y="428" width="28" height="4" fill="#0e7a16"/><rect x="2388" y="434" width="28" height="4" fill="#0e7a16"/><rect x="2388" y="440" width="28" height="6" fill="#0e7a16"/><rect x="2388" y="478" width="28" height="3.5" fill="#c79a1f"/><rect x="2388" y="531" width="28" height="3.5" fill="#c79a1f"/><rect x="2388" y="542" width="28" height="3.5" fill="#c79a1f"/><g fill="#afb1b3"><circle cx="2537" cy="174" r="4.5"/><ellipse cx="2537" cy="185" rx="5" ry="6.5"/></g><path d="M2528 170 L2533 175 L2528 180 M2546 170 L2541 175 L2546 180 M2528 191 V186 L2533 182 M2546 191 V186 L2541 182 M2527 178.5 H2547" stroke="#afb1b3" stroke-width="1.5" fill="none"/><text x="2522" y="357" font-family="Liberation Sans" font-weight="700" font-style="italic" font-size="31" fill="#afb1b3" letter-spacing="-1">m</text><circle cx="2536" cy="498" r="14" fill="#afb1b3"/><rect x="2522" y="497" width="28" height="2" fill="#3c3f41"/><path d="M2530 489 L2542 507 M2542 489 L2530 507" stroke="#3c3f41" stroke-width="3.5"/><path d="M2530 489 L2542 507 M2542 489 L2530 507" stroke="#afb1b3" stroke-width="1.2"/><g fill="#afb1b3"><ellipse cx="2537" cy="882" rx="11" ry="3.8"/><path d="M2526 885 Q2537 891 2548 885 V889 Q2537 895 2526 889 Z"/><path d="M2526 892 Q2537 898 2548 892 V896 Q2537 902 2526 896 Z"/></g><path d="M8 272 H17.9 L21.2 275.6 H30 V290 H8 Z" fill="#bdbfc1"/><rect x="10" y="1139" width="9" height="9" fill="#afb1b3"/><rect x="20" y="1139" width="9" height="9" fill="#afb1b3"/><rect x="20" y="1130" width="9" height="8" fill="#afb1b3"/><g transform="translate(5,1270) scale(0.95)"><use href="#rocket"/></g><text x="20" y="1298" font-family="Liberation Sans" font-weight="700" font-size="12" fill="#fff">JR</text><polygon points="19,1466 23,1476 32,1476.5 25,1483 27.5,1492 19,1487 10.5,1492 13,1483 6,1476.5 15,1476" fill="#afb1b3"/><use href="#gopherm" x="142" y="984" /><path d="M714 1001 L729 1016 M729 1001 L714 1016" stroke="#8c8c8c" stroke-width="1.8"/><rect x="2432.49" y="993" width="7.0200000000000005" height="7.8" rx="1" transform="rotate(0 2436 1006)" fill="#afb1b3"/><rect x="2432.49" y="993" width="7.0200000000000005" height="7.8" rx="1" transform="rotate(60 2436 1006)" fill="#afb1b3"/><rect x="2432.49" y="993" width="7.0200000000000005" height="7.8" rx="1" transform="rotate(120 2436 1006)" fill="#afb1b3"/><rect x="2432.49" y="993" width="7.0200000000000005" height="7.8" rx="1" transform="rotate(180 2436 1006)" fill="#afb1b3"/><rect x="2432.49" y="993" width="7.0200000000000005" height="7.8" rx="1" transform="rotate(240 2436 1006)" fill="#afb1b3"/><rect x="2432.49" y="993" width="7.0200000000000005" height="7.8" rx="1" transform="rotate(300 2436 1006)" fill="#afb1b3"/><circle cx="2436" cy="1006" r="9.62" fill="#afb1b3"/><circle cx="2436" cy="1006" r="4.29" fill="#3c3f41"/><rect x="2476" y="1003" width="24" height="3.5" fill="#afb1b3"/><polygon points="60,1050 60,1074 80,1062" fill="#499c54"/><circle cx="72" cy="1112" r="12" fill="#c75450"/><rect x="70" y="1104" width="4" height="9" fill="#3c3f41"/><rect x="70" y="1115" width="4" height="3.5" fill="#3c3f41"/><polygon points="54,1107.5 54,1128 69,1117.8" fill="#499c54" stroke="#3c3f41" stroke-width="1.5"/><path d="M78 1161.5 A10.5 10.5 0 0 0 62 1155.5" stroke="#afb1b3" stroke-width="2.6" fill="none"/><polygon points="57.5,1151 64.5,1158 56.5,1160" fill="#afb1b3"/><path d="M58 1170.5 A10.5 10.5 0 0 0 74 1176.5" stroke="#afb1b3" stroke-width="2.6" fill="none"/><polygon points="78.5,1172 78.5,1180.5 71,1179" fill="#afb1b3"/><rect x="57" y="1162.5" width="6.5" height="6.5" fill="none" stroke="#afb1b3" stroke-width="1.8"/><rect x="72.5" y="1162.5" width="6.5" height="6.5" fill="none" stroke="#afb1b3" stroke-width="1.8"/><rect x="48" y="1199" width="40" height="1.5" fill="#515658"/><rect x="48" y="1265" width="40" height="1.5" fill="#515658"/><rect x="48" y="1331" width="40" height="1.5" fill="#515658"/><rect x="58" y="1222" width="20" height="20" fill="#5a5a5a"/><rect x="56" y="1288" width="14" height="9" fill="#afb1b3"/><rect x="72" y="1288" width="8" height="9" fill="#afb1b3"/><rect x="56" y="1299" width="24" height="9" fill="#afb1b3"/><polygon points="72,1350 82,1359 75,1363 76,1372 68,1366 53,1378 64,1361 60,1355 69,1357" fill="#afb1b3"/><path d="M115.5 1058.5 L124.5 1067.5 L141.5 1050" stroke="#afb1b3" stroke-width="3.8" fill="none"/><rect x="158" y="1036" width="44" height="44" rx="6" fill="#5c6164"/><circle cx="180" cy="1058" r="11" fill="none" stroke="#afb1b3" stroke-width="3"/><path d="M173 1065 L187 1051" stroke="#afb1b3" stroke-width="3"/><rect x="212" y="1038" width="1.5" height="40" fill="#515658"/><rect x="331.5" y="1038" width="1.5" height="40" fill="#515658"/><rect x="449" y="1038" width="1.5" height="40" fill="#515658"/><path d="M238 1046 V1068" stroke="#afb1b3" stroke-width="3"/><polygon points="231.5,1060 244.5,1060 238,1070" fill="#afb1b3"/><text x="247" y="1056" font-family="Liberation Sans" font-size="12" font-weight="700" fill="#afb1b3">a</text><text x="247" y="1070" font-family="Liberation Sans" font-size="12" font-weight="700" fill="#afb1b3">z</text><path d="M290 1046 V1068" stroke="#afb1b3" stroke-width="3"/><polygon points="283,1060 297,1060 290,1070" fill="#afb1b3"/><rect x="299" y="1046" width="13" height="3" fill="#afb1b3"/><rect x="299" y="1053" width="10" height="3" fill="#afb1b3"/><rect x="299" y="1060" width="4" height="3" fill="#afb1b3"/><rect x="307" y="1060" width="4" height="3" fill="#afb1b3"/><rect x="352" y="1045" width="25" height="3" fill="#afb1b3"/><polygon points="357,1054 371,1054 364,1048" fill="#afb1b3"/><polygon points="357,1060 371,1060 364,1066" fill="#afb1b3"/><rect x="352" y="1067" width="25" height="3" fill="#afb1b3"/><polygon points="409,1046 424,1046 416.5,1053.5" fill="#afb1b3"/><rect x="404" y="1056" width="25" height="3" fill="#afb1b3"/><polygon points="409,1069.5 424,1069.5 416.5,1062" fill="#afb1b3"/><path d="M482.6 1048 V1070" stroke="#5f6366" stroke-width="3"/><polygon points="472.6,1057 492.6,1057 482.6,1046" fill="#5f6366"/><path d="M557 1051 L561 1055.5 L557 1060 M564 1051 L568 1055.5 L564 1060" stroke="#afb1b3" stroke-width="1.6" fill="none"/><circle cx="603" cy="1056" r="13" fill="#f0a732"/><path d="M597 1050 L609 1062 M609 1050 L597 1062" stroke="#3c3f41" stroke-width="3"/><polygon points="110,1100 128,1100 119.0,1115" fill="#afb1b3"/><circle cx="160" cy="1106" r="13" fill="#be923d"/><path d="M154 1100 L166 1112 M166 1100 L154 1112" stroke="#0d293e" stroke-width="3"/><circle cx="196" cy="1142" r="13" fill="#e0a436"/><path d="M190 1136 L202 1148 M202 1136 L190 1148" stroke="#3c3f41" stroke-width="3"/><rect x="587.5" y="1098.5" width="15" height="15" fill="none" stroke="#5e6366" stroke-width="1.3"/><path d="M591 1106 H599 M595 1102 V1110" stroke="#7b7f82" stroke-width="1.3"/><g fill="#5f6366"><circle cx="2485" cy="1122" r="7"/><circle cx="2498" cy="1113" r="4"/><circle cx="2486" cy="1103" r="2"/><circle cx="2491" cy="1111" r="1.8"/><circle cx="2490" cy="1130" r="1.5"/></g><path d="M2489 1160 V1180" stroke="#afb1b3" stroke-width="3.2"/><polygon points="2478,1168 2500,1168 2489,1156" fill="#afb1b3"/><path d="M2489 1208 V1228" stroke="#afb1b3" stroke-width="3.2"/><polygon points="2478,1220 2500,1220 2489,1232" fill="#afb1b3"/><rect x="2476" y="1259" width="24" height="3" fill="#afb1b3"/><rect x="2476" y="1270" width="6" height="3" fill="#afb1b3"/><path d="M2484 1271.5 H2494 A5 5 0 0 1 2494 1281.5 H2487" stroke="#afb1b3" stroke-width="3" fill="none"/><polygon points="2485,1281.5 2491,1277 2491,1287" fill="#afb1b3"/><rect x="2476" y="1319" width="8" height="3" fill="#afb1b3"/><rect x="2476" y="1325" width="8" height="3" fill="#afb1b3"/><path d="M2492 1311 V1325" stroke="#afb1b3" stroke-width="3"/><polygon points="2485,1322 2499,1322 2492,1330" fill="#afb1b3"/><rect x="2476" y="1331.5" width="24" height="3" fill="#afb1b3"/><rect x="2481" y="1364" width="16" height="6" fill="#afb1b3"/><rect x="2476" y="1371" width="26" height="12" rx="2" fill="#afb1b3"/><rect x="2482" y="1378" width="14" height="12" fill="#3c3f41"/><rect x="2484" y="1380" width="10" height="8" fill="none" stroke="#afb1b3" stroke-width="2"/><rect x="2484" y="1414" width="10" height="3" fill="#afb1b3"/><rect x="2478" y="1417" width="22" height="3" fill="#afb1b3"/><rect x="2480" y="1422" width="18" height="18" rx="2" fill="#afb1b3"/><polygon points="61,1529 61,1547 78,1538" fill="#c8c8c8"/><rect x="92" y="1551" width="12" height="1.6" fill="#bbbbbb"/><rect x="230" y="1551" width="12" height="1.6" fill="#bbbbbb"/><rect x="400" y="1551" width="12" height="1.6" fill="#bbbbbb"/><rect x="908" y="1551" width="12" height="1.6" fill="#bbbbbb"/><g transform="translate(199,1528) scale(0.84,0.72)" color="#afb1b3"><use href="#bug"/></g><g fill="#afb1b3"><rect x="370" y="1530" width="3.5" height="3.5"/><rect x="370" y="1536.5" width="3.5" height="3.5"/><rect x="370" y="1543" width="3.5" height="3.5"/><rect x="376" y="1530" width="14" height="3.5"/><rect x="376" y="1536.5" width="14" height="3.5"/><rect x="376" y="1543" width="14" height="3.5"/></g><rect x="532" y="1528" width="22" height="19.5" fill="#afb1b3"/><path d="M535 1532 L540 1536 L535 1540 M541 1543 H549" stroke="#3c3f41" stroke-width="1.8" fill="none"/><polygon points="708.9,1528 720.75,1548 697,1548" fill="#afb1b3"/><rect x="707.6" y="1534" width="2.8" height="7" fill="#3c3f41"/><rect x="707.6" y="1543" width="2.8" height="2.5" fill="#3c3f41"/><rect x="877.5" y="1530" width="3" height="20" fill="#afb1b3"/><path d="M880 1540 H887 L894 1533" stroke="#afb1b3" stroke-width="3" fill="none"/><polygon points="889,1529 899,1529 899,1539" fill="#afb1b3"/><path d="M2133 1551 A12 12 0 1 1 2145 1539 V1551 Z" fill="none" stroke="#afb1b3" stroke-width="2.4"/><g transform="translate(2299,1526) scale(0.95)"><use href="#rocket"/></g><text x="2314" y="1553" font-family="Liberation Sans" font-weight="700" font-size="12" fill="#fff">JR</text><rect x="15" y="1568" width="18" height="18" fill="none" stroke="#afb1b3" stroke-width="1.8"/><path d="M11 1572 V1591 H29" stroke="#afb1b3" stroke-width="1.8" fill="none"/><polygon points="1930,1578 1940.5,1578 1935.25,1572" fill="#afb1b3"/><polygon points="1930,1582 1940.5,1582 1935.25,1588" fill="#afb1b3"/><polygon points="2105,1578 2115.5,1578 2110.25,1572" fill="#afb1b3"/><polygon points="2105,1582 2115.5,1582 2110.25,1588" fill="#afb1b3"/><polygon points="2267.4,1578 2277.9,1578 2272.65,1572" fill="#afb1b3"/><polygon points="2267.4,1582 2277.9,1582 2272.65,1588" fill="#afb1b3"/><rect x="2305" y="1578" width="17" height="12" fill="#afb1b3"/><path d="M2302 1578 V1573 A5 5 0 0 1 2312 1573" stroke="#afb1b3" stroke-width="2.4" fill="none"/><g fill="#afb1b3"><path d="M2355 1574 V1570 Q2355 1565.5 2362 1565.5 Q2369 1565.5 2369 1570 V1574 Z"/><rect x="2350" y="1572.5" width="24" height="2.6" rx="1"/><circle cx="2362" cy="1580.5" r="6.3"/><path d="M2352 1592 Q2353 1586.5 2362 1586.5 Q2371 1586.5 2372 1592 Z"/></g><circle cx="2359.5" cy="1579.5" r="1" fill="#3c3f41"/><circle cx="2364.5" cy="1579.5" r="1" fill="#3c3f41"/><path d="M2359 1582.5 Q2362 1585 2365 1582.5" stroke="#3c3f41" stroke-width="1.1" fill="none"/><rect x="2426" y="196.75" width="14" height="3.5" fill="#6d767e"/><rect x="2440" y="196.75" width="6" height="3.5" fill="#4f5e48"/><rect x="2448" y="196.75" width="2" height="3.5" fill="#4f5e48"/><rect x="2452" y="196.75" width="6" height="3.5" fill="#4f5e48"/><rect x="2458" y="196.75" width="2" height="3.5" fill="#8c5a36"/><rect x="2462" y="196.75" width="6" height="3.5" fill="#6d767e"/><rect x="2426" y="208.75" width="4" height="3.5" fill="#6d767e"/><rect x="2432" y="208.75" width="4" height="3.5" fill="#6d767e"/><rect x="2438" y="208.75" width="6" height="3.5" fill="#6d767e"/><rect x="2444" y="208.75" width="2" height="3.5" fill="#58768f"/><rect x="2446" y="208.75" width="2" height="3.5" fill="#6d767e"/><rect x="2448" y="208.75" width="2" height="3.5" fill="#58768f"/><rect x="2450" y="208.75" width="2" height="3.5" fill="#6d767e"/><rect x="2426" y="214.75" width="4" height="3.5" fill="#555758"/><rect x="2432" y="214.75" width="4" height="3.5" fill="#555758"/><rect x="2438" y="214.75" width="2" height="3.5" fill="#555758"/><rect x="2442" y="214.75" width="4" height="3.5" fill="#555758"/><rect x="2448" y="214.75" width="4" height="3.5" fill="#555758"/><rect x="2426" y="220.75" width="14" height="3.5" fill="#6d767e"/><rect x="2440" y="220.75" width="6" height="3.5" fill="#4f5e48"/><rect x="2448" y="220.75" width="2" height="3.5" fill="#4f5e48"/><rect x="2452" y="220.75" width="6" height="3.5" fill="#4f5e48"/><rect x="2458" y="220.75" width="2" height="3.5" fill="#8c5a36"/><rect x="2462" y="220.75" width="6" height="3.5" fill="#6d767e"/><rect x="2426" y="232.75" width="4" height="3.5" fill="#6d767e"/><rect x="2432" y="232.75" width="4" height="3.5" fill="#6d767e"/><rect x="2438" y="232.75" width="6" height="3.5" fill="#6d767e"/><rect x="2444" y="232.75" width="2" height="3.5" fill="#58768f"/><rect x="2446" y="232.75" width="2" height="3.5" fill="#6d767e"/><rect x="2448" y="232.75" width="2" height="3.5" fill="#58768f"/><rect x="2450" y="232.75" width="2" height="3.5" fill="#6d767e"/><rect x="2426" y="238.75" width="4" height="3.5" fill="#555758"/><rect x="2432" y="238.75" width="4" height="3.5" fill="#555758"/><rect x="2438" y="238.75" width="2" height="3.5" fill="#555758"/><rect x="2442" y="238.75" width="4" height="3.5" fill="#555758"/><rect x="2448" y="238.75" width="4" height="3.5" fill="#555758"/><rect x="2454" y="238.75" width="2" height="3.5" fill="#555758"/><rect x="2458" y="238.75" width="2" height="3.5" fill="#555758"/><rect x="2462" y="238.75" width="2" height="3.5" fill="#555758"/><rect x="2466" y="238.75" width="2" height="3.5" fill="#555758"/><rect x="2426" y="244.75" width="14" height="3.5" fill="#6d767e"/><rect x="2440" y="244.75" width="6" height="3.5" fill="#4f5e48"/><rect x="2448" y="244.75" width="2" height="3.5" fill="#4f5e48"/><rect x="2452" y="244.75" width="6" height="3.5" fill="#4f5e48"/><rect x="2458" y="244.75" width="2" height="3.5" fill="#8c5a36"/><rect x="2462" y="244.75" width="6" height="3.5" fill="#6d767e"/><rect x="2426" y="256.75" width="8" height="3.5" fill="#6d767e"/><rect x="2436" y="256.75" width="2" height="3.5" fill="#6d767e"/><rect x="2440" y="256.75" width="20" height="3.5" fill="#6d767e"/><rect x="2426" y="262.75" width="4" height="3.5" fill="#555758"/><rect x="2432" y="262.75" width="4" height="3.5" fill="#555758"/><rect x="2438" y="262.75" width="2" height="3.5" fill="#555758"/><rect x="2442" y="262.75" width="4" height="3.5" fill="#555758"/><rect x="2448" y="262.75" width="2" height="3.5" fill="#555758"/><rect x="2452" y="262.75" width="6" height="3.5" fill="#555758"/><rect x="2426" y="268.75" width="14" height="3.5" fill="#6d767e"/><rect x="2440" y="268.75" width="6" height="3.5" fill="#4f5e48"/><rect x="2448" y="268.75" width="2" height="3.5" fill="#4f5e48"/><rect x="2452" y="268.75" width="6" height="3.5" fill="#4f5e48"/><rect x="2458" y="268.75" width="2" height="3.5" fill="#8c5a36"/><rect x="2462" y="268.75" width="6" height="3.5" fill="#6d767e"/><rect x="2426" y="274.75" width="4" height="3.5" fill="#555758"/><rect x="2432" y="274.75" width="6" height="3.5" fill="#555758"/><rect x="2440" y="274.75" width="2" height="3.5" fill="#555758"/><rect x="2444" y="274.75" width="4" height="3.5" fill="#555758"/><rect x="2450" y="274.75" width="2" height="3.5" fill="#555758"/><rect x="2454" y="274.75" width="2" height="3.5" fill="#555758"/><rect x="2458" y="274.75" width="2" height="3.5" fill="#555758"/><rect x="2462" y="274.75" width="2" height="3.5" fill="#555758"/><rect x="2466" y="274.75" width="2" height="3.5" fill="#555758"/><rect x="2470" y="274.75" width="2" height="3.5" fill="#555758"/><rect x="2474" y="274.75" width="4" height="3.5" fill="#555758"/><rect x="2426" y="280.75" width="14" height="3.5" fill="#6d767e"/><rect x="2440" y="280.75" width="8" height="3.5" fill="#4f5e48"/><rect x="2450" y="280.75" width="2" height="3.5" fill="#4f5e48"/><rect x="2454" y="280.75" width="6" height="3.5" fill="#4f5e48"/><rect x="2460" y="280.75" width="2" height="3.5" fill="#8c5a36"/><rect x="2464" y="280.75" width="8" height="3.5" fill="#6d767e"/><rect x="2426" y="292.75" width="8" height="3.5" fill="#6d767e"/><rect x="2436" y="292.75" width="2" height="3.5" fill="#6d767e"/><rect x="2440" y="292.75" width="20" height="3.5" fill="#6d767e"/><rect x="2426" y="298.75" width="4" height="3.5" fill="#555758"/><rect x="2432" y="298.75" width="4" height="3.5" fill="#555758"/><rect x="2438" y="298.75" width="2" height="3.5" fill="#555758"/><rect x="2442" y="298.75" width="4" height="3.5" fill="#555758"/><rect x="2448" y="298.75" width="2" height="3.5" fill="#555758"/><rect x="2452" y="298.75" width="4" height="3.5" fill="#555758"/><rect x="2458" y="298.75" width="6" height="3.5" fill="#555758"/><rect x="2426" y="304.75" width="14" height="3.5" fill="#6d767e"/><rect x="2440" y="304.75" width="6" height="3.5" fill="#4f5e48"/><rect x="2448" y="304.75" width="2" height="3.5" fill="#4f5e48"/><rect x="2452" y="304.75" width="6" height="3.5" fill="#4f5e48"/><rect x="2458" y="304.75" width="2" height="3.5" fill="#8c5a36"/><rect x="2462" y="304.75" width="6" height="3.5" fill="#6d767e"/><rect x="2426" y="310.75" width="4" height="3.5" fill="#555758"/><rect x="2432" y="310.75" width="6" height="3.5" fill="#555758"/><rect x="2440" y="310.75" width="2" height="3.5" fill="#555758"/><rect x="2444" y="310.75" width="4" height="3.5" fill="#555758"/><rect x="2450" y="310.75" width="2" height="3.5" fill="#555758"/><rect x="2454" y="310.75" width="2" height="3.5" fill="#555758"/><rect x="2458" y="310.75" width="2" height="3.5" fill="#555758"/><rect x="2462" y="310.75" width="2" height="3.5" fill="#555758"/><rect x="2466" y="310.75" width="2" height="3.5" fill="#555758"/><rect x="2470" y="310.75" width="2" height="3.5" fill="#555758"/><rect x="2474" y="310.75" width="2" height="3.5" fill="#555758"/><rect x="2478" y="310.75" width="4" height="3.5" fill="#555758"/><rect x="2426" y="316.75" width="14" height="3.5" fill="#6d767e"/><rect x="2440" y="316.75" width="8" height="3.5" fill="#4f5e48"/><rect x="2450" y="316.75" width="2" height="3.5" fill="#4f5e48"/><rect x="2454" y="316.75" width="6" height="3.5" fill="#4f5e48"/><rect x="2460" y="316.75" width="2" height="3.5" fill="#8c5a36"/><rect x="2464" y="316.75" width="8" height="3.5" fill="#6d767e"/><rect x="2418" y="322.75" width="2" height="3.5" fill="#6d767e"/><rect x="2418" y="334.75" width="8" height="3.5" fill="#8c5a36"/><rect x="2428" y="334.75" width="34" height="3.5" fill="#6d767e"/><rect x="2464" y="334.75" width="22" height="3.5" fill="#6d767e"/><rect x="2488" y="334.75" width="2" height="3.5" fill="#6d767e"/><rect x="2426" y="340.75" width="6" height="3.5" fill="#6d767e"/><rect x="2434" y="340.75" width="4" height="3.5" fill="#6d767e"/><rect x="2440" y="340.75" width="18" height="3.5" fill="#6d767e"/><rect x="2458" y="340.75" width="2" height="3.5" fill="#58768f"/><rect x="2460" y="340.75" width="2" height="3.5" fill="#8c5a36"/><rect x="2464" y="340.75" width="2" height="3.5" fill="#58768f"/><rect x="2466" y="340.75" width="2" height="3.5" fill="#8c5a36"/><rect x="2470" y="340.75" width="2" height="3.5" fill="#58768f"/><rect x="2472" y="340.75" width="2" height="3.5" fill="#8c5a36"/><rect x="2476" y="340.75" width="2" height="3.5" fill="#58768f"/><rect x="2478" y="340.75" width="2" height="3.5" fill="#8c5a36"/><rect x="2482" y="340.75" width="2" height="3.5" fill="#58768f"/><rect x="2484" y="340.75" width="2" height="3.5" fill="#8c5a36"/><rect x="2488" y="340.75" width="2" height="3.5" fill="#58768f"/><rect x="2490" y="340.75" width="2" height="3.5" fill="#8c5a36"/><rect x="2494" y="340.75" width="2" height="3.5" fill="#58768f"/><rect x="2496" y="340.75" width="2" height="3.5" fill="#8c5a36"/><rect x="2500" y="340.75" width="2" height="3.5" fill="#58768f"/><rect x="2502" y="340.75" width="2" height="3.5" fill="#8c5a36"/><rect x="2506" y="340.75" width="2" height="3.5" fill="#58768f"/><rect x="2508" y="340.75" width="2" height="3.5" fill="#8c5a36"/><rect x="2512" y="340.75" width="2" height="3.5" fill="#58768f"/><rect x="2514" y="340.75" width="2" height="3.5" fill="#6d767e"/><rect x="2426" y="352.75" width="4" height="3.5" fill="#6d767e"/><rect x="2432" y="352.75" width="4" height="3.5" fill="#6d767e"/><rect x="2438" y="352.75" width="8" height="3.5" fill="#6d767e"/><rect x="2446" y="352.75" width="2" height="3.5" fill="#58768f"/><rect x="2448" y="352.75" width="2" height="3.5" fill="#6d767e"/><rect x="2450" y="352.75" width="2" height="3.5" fill="#58768f"/><rect x="2452" y="352.75" width="2" height="3.5" fill="#6d767e"/><rect x="2426" y="358.75" width="4" height="3.5" fill="#555758"/><rect x="2432" y="358.75" width="4" height="3.5" fill="#555758"/><rect x="2438" y="358.75" width="2" height="3.5" fill="#555758"/><rect x="2442" y="358.75" width="4" height="3.5" fill="#555758"/><rect x="2448" y="358.75" width="2" height="3.5" fill="#555758"/><rect x="2452" y="358.75" width="2" height="3.5" fill="#555758"/><rect x="2456" y="358.75" width="4" height="3.5" fill="#555758"/><rect x="2426" y="364.75" width="14" height="3.5" fill="#6d767e"/><rect x="2440" y="364.75" width="6" height="3.5" fill="#4f5e48"/><rect x="2448" y="364.75" width="2" height="3.5" fill="#4f5e48"/><rect x="2452" y="364.75" width="6" height="3.5" fill="#4f5e48"/><rect x="2458" y="364.75" width="2" height="3.5" fill="#8c5a36"/><rect x="2462" y="364.75" width="6" height="3.5" fill="#6d767e"/><rect x="2426" y="376.75" width="4" height="3.5" fill="#6d767e"/><rect x="2432" y="376.75" width="4" height="3.5" fill="#6d767e"/><rect x="2438" y="376.75" width="6" height="3.5" fill="#6d767e"/><rect x="2444" y="376.75" width="2" height="3.5" fill="#58768f"/><rect x="2446" y="376.75" width="2" height="3.5" fill="#6d767e"/><rect x="2448" y="376.75" width="2" height="3.5" fill="#58768f"/><rect x="2450" y="376.75" width="2" height="3.5" fill="#6d767e"/><rect x="2426" y="382.75" width="4" height="3.5" fill="#555758"/><rect x="2432" y="382.75" width="4" height="3.5" fill="#555758"/><rect x="2438" y="382.75" width="2" height="3.5" fill="#555758"/><rect x="2442" y="382.75" width="4" height="3.5" fill="#555758"/><rect x="2448" y="382.75" width="4" height="3.5" fill="#555758"/><rect x="2426" y="388.75" width="14" height="3.5" fill="#6d767e"/><rect x="2440" y="388.75" width="6" height="3.5" fill="#4f5e48"/><rect x="2448" y="388.75" width="2" height="3.5" fill="#4f5e48"/><rect x="2452" y="388.75" width="6" height="3.5" fill="#4f5e48"/><rect x="2458" y="388.75" width="2" height="3.5" fill="#8c5a36"/><rect x="2462" y="388.75" width="6" height="3.5" fill="#6d767e"/><rect x="2426" y="400.75" width="4" height="3.5" fill="#6d767e"/><rect x="2432" y="400.75" width="4" height="3.5" fill="#6d767e"/><rect x="2438" y="400.75" width="6" height="3.5" fill="#6d767e"/><rect x="2444" y="400.75" width="2" height="3.5" fill="#58768f"/><rect x="2446" y="400.75" width="2" height="3.5" fill="#6d767e"/><rect x="2448" y="400.75" width="2" height="3.5" fill="#58768f"/><rect x="2450" y="400.75" width="2" height="3.5" fill="#6d767e"/><rect x="2426" y="406.75" width="4" height="3.5" fill="#555758"/><rect x="2432" y="406.75" width="4" height="3.5" fill="#555758"/><rect x="2438" y="406.75" width="2" height="3.5" fill="#555758"/><rect x="2444" y="406.75" width="4" height="3.5" fill="#555758"/><rect x="2450" y="406.75" width="2" height="3.5" fill="#555758"/><rect x="2454" y="406.75" width="2" height="3.5" fill="#555758"/><rect x="2458" y="406.75" width="2" height="3.5" fill="#555758"/><rect x="2462" y="406.75" width="2" height="3.5" fill="#555758"/><rect x="2466" y="406.75" width="4" height="3.5" fill="#555758"/><rect x="2426" y="412.75" width="12" height="3.5" fill="#6d767e"/><rect x="2438" y="412.75" width="6" height="3.5" fill="#4f5e48"/><rect x="2446" y="412.75" width="2" height="3.5" fill="#4f5e48"/><rect x="2450" y="412.75" width="2" height="3.5" fill="#4f5e48"/><rect x="2452" y="412.75" width="2" height="3.5" fill="#8c5a36"/><rect x="2456" y="412.75" width="6" height="3.5" fill="#6d767e"/><rect x="2418" y="418.75" width="2" height="3.5" fill="#6d767e"/><rect x="2418" y="430.75" width="8" height="3.5" fill="#8c5a36"/><rect x="2428" y="430.75" width="42" height="3.5" fill="#6d767e"/><rect x="2472" y="430.75" width="22" height="3.5" fill="#6d767e"/><rect x="2496" y="430.75" width="2" height="3.5" fill="#6d767e"/><rect x="2426" y="436.75" width="6" height="3.5" fill="#6d767e"/><rect x="2434" y="436.75" width="4" height="3.5" fill="#6d767e"/><rect x="2440" y="436.75" width="18" height="3.5" fill="#6d767e"/><rect x="2458" y="436.75" width="2" height="3.5" fill="#58768f"/><rect x="2460" y="436.75" width="2" height="3.5" fill="#8c5a36"/><rect x="2464" y="436.75" width="2" height="3.5" fill="#58768f"/><rect x="2466" y="436.75" width="2" height="3.5" fill="#8c5a36"/><rect x="2470" y="436.75" width="2" height="3.5" fill="#58768f"/><rect x="2472" y="436.75" width="2" height="3.5" fill="#8c5a36"/><rect x="2476" y="436.75" width="2" height="3.5" fill="#58768f"/><rect x="2478" y="436.75" width="2" height="3.5" fill="#8c5a36"/><rect x="2482" y="436.75" width="2" height="3.5" fill="#58768f"/><rect x="2484" y="436.75" width="2" height="3.5" fill="#8c5a36"/><rect x="2488" y="436.75" width="2" height="3.5" fill="#58768f"/><rect x="2490" y="436.75" width="2" height="3.5" fill="#8c5a36"/><rect x="2494" y="436.75" width="2" height="3.5" fill="#58768f"/><rect x="2496" y="436.75" width="2" height="3.5" fill="#8c5a36"/><rect x="2500" y="436.75" width="2" height="3.5" fill="#58768f"/><rect x="2502" y="436.75" width="2" height="3.5" fill="#6d767e"/><rect x="2426" y="448.75" width="4" height="3.5" fill="#6d767e"/><rect x="2432" y="448.75" width="4" height="3.5" fill="#6d767e"/><rect x="2438" y="448.75" width="8" height="3.5" fill="#6d767e"/><rect x="2446" y="448.75" width="2" height="3.5" fill="#58768f"/><rect x="2448" y="448.75" width="2" height="3.5" fill="#6d767e"/><rect x="2450" y="448.75" width="2" height="3.5" fill="#58768f"/><rect x="2452" y="448.75" width="2" height="3.5" fill="#6d767e"/><rect x="2426" y="454.75" width="4" height="3.5" fill="#555758"/><rect x="2432" y="454.75" width="4" height="3.5" fill="#555758"/><rect x="2438" y="454.75" width="2" height="3.5" fill="#555758"/><rect x="2442" y="454.75" width="4" height="3.5" fill="#555758"/><rect x="2448" y="454.75" width="2" height="3.5" fill="#555758"/><rect x="2452" y="454.75" width="2" height="3.5" fill="#555758"/><rect x="2456" y="454.75" width="6" height="3.5" fill="#555758"/><rect x="2464" y="454.75" width="14" height="3.5" fill="#555758"/><rect x="2480" y="454.75" width="2" height="3.5" fill="#555758"/><rect x="2484" y="454.75" width="4" height="3.5" fill="#555758"/><rect x="2490" y="454.75" width="14" height="3.5" fill="#555758"/><rect x="2506" y="454.75" width="2" height="3.5" fill="#555758"/><rect x="2510" y="454.75" width="2" height="3.5" fill="#555758"/><rect x="2426" y="460.75" width="14" height="3.5" fill="#6d767e"/><rect x="2440" y="460.75" width="6" height="3.5" fill="#4f5e48"/><rect x="2448" y="460.75" width="2" height="3.5" fill="#4f5e48"/><rect x="2452" y="460.75" width="6" height="3.5" fill="#4f5e48"/><rect x="2460" y="460.75" width="14" height="3.5" fill="#4f5e48"/><rect x="2476" y="460.75" width="2" height="3.5" fill="#4f5e48"/><rect x="2480" y="460.75" width="6" height="3.5" fill="#4f5e48"/><rect x="2488" y="460.75" width="14" height="3.5" fill="#4f5e48"/><rect x="2504" y="460.75" width="2" height="3.5" fill="#4f5e48"/><rect x="2508" y="460.75" width="6" height="3.5" fill="#4f5e48"/><rect x="2514" y="460.75" width="2" height="3.5" fill="#8c5a36"/><rect x="2426" y="472.75" width="4" height="3.5" fill="#6d767e"/><rect x="2432" y="472.75" width="4" height="3.5" fill="#6d767e"/><rect x="2438" y="472.75" width="6" height="3.5" fill="#6d767e"/><rect x="2444" y="472.75" width="2" height="3.5" fill="#58768f"/><rect x="2446" y="472.75" width="2" height="3.5" fill="#6d767e"/><rect x="2448" y="472.75" width="2" height="3.5" fill="#58768f"/><rect x="2450" y="472.75" width="2" height="3.5" fill="#6d767e"/><rect x="2426" y="478.75" width="4" height="3.5" fill="#555758"/><rect x="2432" y="478.75" width="4" height="3.5" fill="#555758"/><rect x="2438" y="478.75" width="2" height="3.5" fill="#555758"/><rect x="2442" y="478.75" width="4" height="3.5" fill="#555758"/><rect x="2448" y="478.75" width="6" height="3.5" fill="#555758"/><rect x="2456" y="478.75" width="14" height="3.5" fill="#555758"/><rect x="2472" y="478.75" width="2" height="3.5" fill="#555758"/><rect x="2476" y="478.75" width="4" height="3.5" fill="#555758"/><rect x="2482" y="478.75" width="14" height="3.5" fill="#555758"/><rect x="2498" y="478.75" width="2" height="3.5" fill="#555758"/><rect x="2502" y="478.75" width="2" height="3.5" fill="#555758"/><rect x="2426" y="484.75" width="14" height="3.5" fill="#6d767e"/><rect x="2440" y="484.75" width="6" height="3.5" fill="#4f5e48"/><rect x="2448" y="484.75" width="2" height="3.5" fill="#4f5e48"/><rect x="2452" y="484.75" width="6" height="3.5" fill="#4f5e48"/><rect x="2460" y="484.75" width="14" height="3.5" fill="#4f5e48"/><rect x="2476" y="484.75" width="2" height="3.5" fill="#4f5e48"/><rect x="2480" y="484.75" width="6" height="3.5" fill="#4f5e48"/><rect x="2488" y="484.75" width="14" height="3.5" fill="#4f5e48"/><rect x="2504" y="484.75" width="2" height="3.5" fill="#4f5e48"/><rect x="2508" y="484.75" width="6" height="3.5" fill="#4f5e48"/><rect x="2514" y="484.75" width="2" height="3.5" fill="#8c5a36"/><rect x="2426" y="496.75" width="4" height="3.5" fill="#555758"/><rect x="2432" y="496.75" width="4" height="3.5" fill="#555758"/><rect x="2438" y="496.75" width="2" height="3.5" fill="#555758"/><rect x="2442" y="496.75" width="4" height="3.5" fill="#555758"/><rect x="2448" y="496.75" width="2" height="3.5" fill="#555758"/><rect x="2452" y="496.75" width="2" height="3.5" fill="#555758"/><rect x="2456" y="496.75" width="4" height="3.5" fill="#555758"/><rect x="2426" y="502.75" width="18" height="3.5" fill="#6d767e"/><rect x="2444" y="502.75" width="2" height="3.5" fill="#58768f"/><rect x="2446" y="502.75" width="4" height="3.5" fill="#6d767e"/><rect x="2426" y="508.75" width="4" height="3.5" fill="#555758"/><rect x="2432" y="508.75" width="10" height="3.5" fill="#555758"/><rect x="2444" y="508.75" width="6" height="3.5" fill="#555758"/><rect x="2452" y="508.75" width="4" height="3.5" fill="#555758"/><rect x="2458" y="508.75" width="10" height="3.5" fill="#555758"/><rect x="2426" y="514.75" width="18" height="3.5" fill="#6d767e"/><rect x="2444" y="514.75" width="2" height="3.5" fill="#58768f"/><rect x="2446" y="514.75" width="4" height="3.5" fill="#6d767e"/><rect x="2418" y="526.75" width="2" height="3.5" fill="#6d767e"/><rect x="2418" y="538.75" width="8" height="3.5" fill="#8c5a36"/><rect x="2428" y="538.75" width="34" height="3.5" fill="#6d767e"/><rect x="2464" y="538.75" width="22" height="3.5" fill="#6d767e"/><rect x="2488" y="538.75" width="2" height="3.5" fill="#6d767e"/><rect x="2426" y="544.75" width="6" height="3.5" fill="#6d767e"/><rect x="2434" y="544.75" width="4" height="3.5" fill="#6d767e"/><rect x="2440" y="544.75" width="18" height="3.5" fill="#6d767e"/><rect x="2458" y="544.75" width="2" height="3.5" fill="#58768f"/><rect x="2460" y="544.75" width="2" height="3.5" fill="#8c5a36"/><rect x="2464" y="544.75" width="2" height="3.5" fill="#58768f"/><rect x="2466" y="544.75" width="2" height="3.5" fill="#8c5a36"/><rect x="2470" y="544.75" width="2" height="3.5" fill="#58768f"/><rect x="2472" y="544.75" width="2" height="3.5" fill="#8c5a36"/><rect x="2476" y="544.75" width="2" height="3.5" fill="#58768f"/><rect x="2478" y="544.75" width="2" height="3.5" fill="#8c5a36"/><rect x="2482" y="544.75" width="2" height="3.5" fill="#58768f"/><rect x="2484" y="544.75" width="2" height="3.5" fill="#8c5a36"/><rect x="2488" y="544.75" width="2" height="3.5" fill="#58768f"/><rect x="2490" y="544.75" width="2" height="3.5" fill="#8c5a36"/><rect x="2494" y="544.75" width="2" height="3.5" fill="#58768f"/><rect x="2496" y="544.75" width="2" height="3.5" fill="#8c5a36"/><rect x="2500" y="544.75" width="2" height="3.5" fill="#58768f"/><rect x="2502" y="544.75" width="2" height="3.5" fill="#6d767e"/><rect x="2426" y="550.75" width="4" height="3.5" fill="#555758"/><rect x="2432" y="550.75" width="6" height="3.5" fill="#555758"/><rect x="2440" y="550.75" width="2" height="3.5" fill="#555758"/><rect x="2444" y="550.75" width="4" height="3.5" fill="#555758"/><rect x="2450" y="550.75" width="2" height="3.5" fill="#555758"/><rect x="2454" y="550.75" width="2" height="3.5" fill="#555758"/><rect x="2458" y="550.75" width="2" height="3.5" fill="#555758"/><rect x="2462" y="550.75" width="2" height="3.5" fill="#555758"/><rect x="2466" y="550.75" width="2" height="3.5" fill="#555758"/><rect x="2470" y="550.75" width="2" height="3.5" fill="#555758"/><rect x="2474" y="550.75" width="6" height="3.5" fill="#555758"/><rect x="2482" y="550.75" width="16" height="3.5" fill="#555758"/><rect x="2500" y="550.75" width="2" height="3.5" fill="#555758"/><rect x="2504" y="550.75" width="4" height="3.5" fill="#555758"/><rect x="2510" y="550.75" width="6" height="3.5" fill="#555758"/><rect x="2426" y="556.75" width="14" height="3.5" fill="#6d767e"/><rect x="2440" y="556.75" width="8" height="3.5" fill="#4f5e48"/><rect x="2450" y="556.75" width="2" height="3.5" fill="#4f5e48"/><rect x="2454" y="556.75" width="6" height="3.5" fill="#4f5e48"/><rect x="2462" y="556.75" width="16" height="3.5" fill="#4f5e48"/><rect x="2480" y="556.75" width="2" height="3.5" fill="#4f5e48"/><rect x="2484" y="556.75" width="6" height="3.5" fill="#4f5e48"/><rect x="2492" y="556.75" width="16" height="3.5" fill="#4f5e48"/><rect x="2510" y="556.75" width="2" height="3.5" fill="#4f5e48"/><rect x="2514" y="556.75" width="2" height="3.5" fill="#4f5e48"/><rect x="2426" y="568.75" width="4" height="3.5" fill="#6d767e"/><rect x="2432" y="568.75" width="4" height="3.5" fill="#6d767e"/><rect x="2438" y="568.75" width="8" height="3.5" fill="#6d767e"/><rect x="2446" y="568.75" width="2" height="3.5" fill="#58768f"/><rect x="2448" y="568.75" width="2" height="3.5" fill="#6d767e"/><rect x="2450" y="568.75" width="2" height="3.5" fill="#58768f"/><rect x="2452" y="568.75" width="2" height="3.5" fill="#6d767e"/><rect x="2426" y="574.75" width="4" height="3.5" fill="#555758"/><rect x="2432" y="574.75" width="4" height="3.5" fill="#555758"/><rect x="2438" y="574.75" width="2" height="3.5" fill="#555758"/><rect x="2442" y="574.75" width="4" height="3.5" fill="#555758"/><rect x="2448" y="574.75" width="2" height="3.5" fill="#555758"/><rect x="2452" y="574.75" width="2" height="3.5" fill="#555758"/><rect x="2456" y="574.75" width="6" height="3.5" fill="#555758"/><rect x="2464" y="574.75" width="14" height="3.5" fill="#555758"/><rect x="2480" y="574.75" width="2" height="3.5" fill="#555758"/><rect x="2484" y="574.75" width="4" height="3.5" fill="#555758"/><rect x="2490" y="574.75" width="14" height="3.5" fill="#555758"/><rect x="2506" y="574.75" width="2" height="3.5" fill="#555758"/><rect x="2510" y="574.75" width="2" height="3.5" fill="#555758"/><rect x="2426" y="580.75" width="14" height="3.5" fill="#6d767e"/><rect x="2440" y="580.75" width="6" height="3.5" fill="#4f5e48"/><rect x="2448" y="580.75" width="2" height="3.5" fill="#4f5e48"/><rect x="2452" y="580.75" width="6" height="3.5" fill="#4f5e48"/><rect x="2460" y="580.75" width="14" height="3.5" fill="#4f5e48"/><rect x="2476" y="580.75" width="2" height="3.5" fill="#4f5e48"/><rect x="2480" y="580.75" width="6" height="3.5" fill="#4f5e48"/><rect x="2488" y="580.75" width="14" height="3.5" fill="#4f5e48"/><rect x="2504" y="580.75" width="2" height="3.5" fill="#4f5e48"/><rect x="2508" y="580.75" width="6" height="3.5" fill="#4f5e48"/><rect x="2514" y="580.75" width="2" height="3.5" fill="#8c5a36"/><rect x="2426" y="592.75" width="4" height="3.5" fill="#6d767e"/><rect x="2432" y="592.75" width="4" height="3.5" fill="#6d767e"/><rect x="2438" y="592.75" width="6" height="3.5" fill="#6d767e"/><rect x="2444" y="592.75" width="2" height="3.5" fill="#58768f"/><rect x="2446" y="592.75" width="2" height="3.5" fill="#6d767e"/><rect x="2448" y="592.75" width="2" height="3.5" fill="#58768f"/><rect x="2450" y="592.75" width="2" height="3.5" fill="#6d767e"/><rect x="2426" y="598.75" width="4" height="3.5" fill="#555758"/><rect x="2432" y="598.75" width="4" height="3.5" fill="#555758"/><rect x="2438" y="598.75" width="2" height="3.5" fill="#555758"/><rect x="2442" y="598.75" width="4" height="3.5" fill="#555758"/><rect x="2448" y="598.75" width="6" height="3.5" fill="#555758"/><rect x="2456" y="598.75" width="14" height="3.5" fill="#555758"/><rect x="2472" y="598.75" width="2" height="3.5" fill="#555758"/><rect x="2476" y="598.75" width="4" height="3.5" fill="#555758"/><rect x="2482" y="598.75" width="14" height="3.5" fill="#555758"/><rect x="2498" y="598.75" width="2" height="3.5" fill="#555758"/><rect x="2502" y="598.75" width="2" height="3.5" fill="#555758"/><rect x="2426" y="604.75" width="14" height="3.5" fill="#6d767e"/><rect x="2440" y="604.75" width="6" height="3.5" fill="#4f5e48"/><rect x="2448" y="604.75" width="2" height="3.5" fill="#4f5e48"/><rect x="2452" y="604.75" width="6" height="3.5" fill="#4f5e48"/><rect x="2460" y="604.75" width="14" height="3.5" fill="#4f5e48"/><rect x="2476" y="604.75" width="2" height="3.5" fill="#4f5e48"/><rect x="2480" y="604.75" width="6" height="3.5" fill="#4f5e48"/><rect x="2488" y="604.75" width="14" height="3.5" fill="#4f5e48"/><rect x="2504" y="604.75" width="2" height="3.5" fill="#4f5e48"/><rect x="2508" y="604.75" width="6" height="3.5" fill="#4f5e48"/><rect x="2514" y="604.75" width="2" height="3.5" fill="#8c5a36"/><rect x="2426" y="616.75" width="4" height="3.5" fill="#555758"/><rect x="2432" y="616.75" width="4" height="3.5" fill="#555758"/><rect x="2438" y="616.75" width="2" height="3.5" fill="#555758"/><rect x="2442" y="616.75" width="4" height="3.5" fill="#555758"/><rect x="2448" y="616.75" width="2" height="3.5" fill="#555758"/><rect x="2452" y="616.75" width="2" height="3.5" fill="#555758"/><rect x="2456" y="616.75" width="6" height="3.5" fill="#555758"/><rect x="2464" y="616.75" width="10" height="3.5" fill="#555758"/><rect x="2476" y="616.75" width="2" height="3.5" fill="#555758"/><rect x="2480" y="616.75" width="2" height="3.5" fill="#555758"/><rect x="2426" y="622.75" width="4" height="3.5" fill="#555758"/><rect x="2432" y="622.75" width="84" height="3.5" fill="#555758"/><rect x="2418" y="628.75" width="2" height="3.5" fill="#6d767e"/><rect x="2418" y="640.75" width="8" height="3.5" fill="#8c5a36"/><rect x="2428" y="640.75" width="40" height="3.5" fill="#6d767e"/><rect x="2470" y="640.75" width="22" height="3.5" fill="#6d767e"/><rect x="2418" y="652.75" width="8" height="3.5" fill="#8c5a36"/><rect x="2428" y="652.75" width="34" height="3.5" fill="#6d767e"/><rect x="2464" y="652.75" width="22" height="3.5" fill="#6d767e"/><rect x="2418" y="664.75" width="8" height="3.5" fill="#8c5a36"/><rect x="2428" y="664.75" width="30" height="3.5" fill="#6d767e"/><rect x="2460" y="664.75" width="18" height="3.5" fill="#6d767e"/><rect x="2418" y="676.75" width="8" height="3.5" fill="#8c5a36"/><rect x="2428" y="676.75" width="48" height="3.5" fill="#6d767e"/><rect x="2478" y="676.75" width="22" height="3.5" fill="#6d767e"/><rect x="2418" y="688.75" width="8" height="3.5" fill="#8c5a36"/><rect x="2428" y="688.75" width="36" height="3.5" fill="#6d767e"/><rect x="2466" y="688.75" width="22" height="3.5" fill="#6d767e"/><rect x="2418" y="700.75" width="8" height="3.5" fill="#8c5a36"/><rect x="2428" y="700.75" width="50" height="3.5" fill="#6d767e"/><rect x="2480" y="700.75" width="22" height="3.5" fill="#6d767e"/><rect x="2418" y="712.75" width="8" height="3.5" fill="#8c5a36"/><rect x="2428" y="712.75" width="52" height="3.5" fill="#6d767e"/><rect x="2482" y="712.75" width="22" height="3.5" fill="#6d767e"/><rect x="2418" y="724.75" width="8" height="3.5" fill="#8c5a36"/><rect x="2428" y="724.75" width="64" height="3.5" fill="#6d767e"/><rect x="2494" y="724.75" width="22" height="3.5" fill="#6d767e"/><rect x="2418" y="736.75" width="8" height="3.5" fill="#8c5a36"/><rect x="2428" y="736.75" width="36" height="3.5" fill="#6d767e"/><rect x="2466" y="736.75" width="22" height="3.5" fill="#6d767e"/><rect x="2418" y="748.75" width="8" height="3.5" fill="#8c5a36"/><rect x="2428" y="748.75" width="40" height="3.5" fill="#6d767e"/><rect x="2470" y="748.75" width="22" height="3.5" fill="#6d767e"/><rect x="2418" y="760.75" width="8" height="3.5" fill="#8c5a36"/><rect x="2428" y="760.75" width="36" height="3.5" fill="#6d767e"/><rect x="2466" y="760.75" width="22" height="3.5" fill="#6d767e"/><rect x="2418" y="772.75" width="8" height="3.5" fill="#8c5a36"/><rect x="2428" y="772.75" width="30" height="3.5" fill="#6d767e"/><rect x="2460" y="772.75" width="22" height="3.5" fill="#6d767e"/><rect x="2484" y="772.75" width="2" height="3.5" fill="#6d767e"/><rect x="2426" y="778.75" width="2" height="3.5" fill="#6d767e"/><rect x="2430" y="778.75" width="4" height="3.5" fill="#6d767e"/><rect x="2436" y="778.75" width="20" height="3.5" fill="#6d767e"/><rect x="2456" y="778.75" width="2" height="3.5" fill="#8c5a36"/><rect x="2460" y="778.75" width="4" height="3.5" fill="#58768f"/><rect x="2464" y="778.75" width="2" height="3.5" fill="#8c5a36"/><rect x="2468" y="778.75" width="4" height="3.5" fill="#58768f"/><rect x="2472" y="778.75" width="2" height="3.5" fill="#6d767e"/><rect x="2434" y="784.75" width="12" height="3.5" fill="#4f5e48"/><rect x="2446" y="784.75" width="2" height="3.5" fill="#8c5a36"/><rect x="2450" y="784.75" width="42" height="3.5" fill="#4f5e48"/><rect x="2492" y="784.75" width="2" height="3.5" fill="#8c5a36"/><rect x="2434" y="790.75" width="12" height="3.5" fill="#4f5e48"/><rect x="2446" y="790.75" width="2" height="3.5" fill="#8c5a36"/><rect x="2450" y="790.75" width="66" height="3.5" fill="#4f5e48"/><rect x="2426" y="796.75" width="2" height="3.5" fill="#6d767e"/><rect x="2426" y="808.75" width="4" height="3.5" fill="#555758"/><rect x="2432" y="808.75" width="2" height="3.5" fill="#555758"/><rect x="2436" y="808.75" width="30" height="3.5" fill="#555758"/><rect x="2468" y="808.75" width="30" height="3.5" fill="#555758"/><rect x="2426" y="814.75" width="14" height="3.5" fill="#6d767e"/><rect x="2418" y="820.75" width="2" height="3.5" fill="#6d767e"/><rect x="2418" y="832.75" width="8" height="3.5" fill="#8c5a36"/><rect x="2428" y="832.75" width="26" height="3.5" fill="#6d767e"/><rect x="2456" y="832.75" width="22" height="3.5" fill="#6d767e"/><rect x="2480" y="832.75" width="2" height="3.5" fill="#6d767e"/><rect x="2426" y="838.75" width="4" height="3.5" fill="#555758"/><rect x="2432" y="838.75" width="6" height="3.5" fill="#555758"/><rect x="2440" y="838.75" width="6" height="3.5" fill="#555758"/><rect x="2426" y="844.75" width="2" height="3.5" fill="#6d767e"/><rect x="2430" y="844.75" width="4" height="3.5" fill="#6d767e"/><rect x="2436" y="844.75" width="26" height="3.5" fill="#6d767e"/><rect x="2426" y="856.75" width="4" height="3.5" fill="#555758"/><rect x="2432" y="856.75" width="6" height="3.5" fill="#555758"/><rect x="2440" y="856.75" width="6" height="3.5" fill="#555758"/><rect x="2426" y="862.75" width="8" height="3.5" fill="#6d767e"/><rect x="2434" y="862.75" width="2" height="3.5" fill="#8c5a36"/><rect x="2438" y="862.75" width="2" height="3.5" fill="#6d767e"/><rect x="2440" y="862.75" width="2" height="3.5" fill="#8c5a36"/><rect x="2444" y="862.75" width="2" height="3.5" fill="#6d767e"/><rect x="2446" y="862.75" width="2" height="3.5" fill="#8c5a36"/><rect x="2450" y="862.75" width="6" height="3.5" fill="#6d767e"/><rect x="2426" y="874.75" width="4" height="3.5" fill="#555758"/><rect x="2432" y="874.75" width="2" height="3.5" fill="#555758"/><rect x="2436" y="874.75" width="2" height="3.5" fill="#555758"/><rect x="2426" y="880.75" width="4" height="3.5" fill="#8c5a36"/><rect x="2432" y="880.75" width="2" height="3.5" fill="#6d767e"/><rect x="2436" y="880.75" width="4" height="3.5" fill="#6d767e"/><rect x="2442" y="880.75" width="16" height="3.5" fill="#6d767e"/><rect x="2426" y="892.75" width="4" height="3.5" fill="#555758"/><rect x="2432" y="892.75" width="6" height="3.5" fill="#555758"/><rect x="2440" y="892.75" width="6" height="3.5" fill="#555758"/><rect x="2426" y="898.75" width="8" height="3.5" fill="#6d767e"/><rect x="2434" y="898.75" width="2" height="3.5" fill="#8c5a36"/><rect x="2438" y="898.75" width="2" height="3.5" fill="#6d767e"/><rect x="2440" y="898.75" width="2" height="3.5" fill="#8c5a36"/><rect x="2444" y="898.75" width="2" height="3.5" fill="#6d767e"/><rect x="2446" y="898.75" width="2" height="3.5" fill="#8c5a36"/><rect x="2450" y="898.75" width="6" height="3.5" fill="#6d767e"/><rect x="2418" y="904.75" width="2" height="3.5" fill="#6d767e"/><rect x="2418" y="916.75" width="8" height="3.5" fill="#8c5a36"/><rect x="2428" y="916.75" width="34" height="3.5" fill="#6d767e"/><rect x="2464" y="916.75" width="22" height="3.5" fill="#6d767e"/><rect x="2488" y="916.75" width="2" height="3.5" fill="#6d767e"/><rect x="2426" y="922.75" width="2" height="3.5" fill="#6d767e"/><rect x="2430" y="922.75" width="4" height="3.5" fill="#6d767e"/><rect x="2436" y="922.75" width="20" height="3.5" fill="#6d767e"/><rect x="2456" y="922.75" width="2" height="3.5" fill="#8c5a36"/><rect x="2460" y="922.75" width="4" height="3.5" fill="#58768f"/><rect x="2464" y="922.75" width="2" height="3.5" fill="#6d767e"/><rect x="2434" y="928.75" width="12" height="3.5" fill="#4f5e48"/><rect x="2446" y="928.75" width="2" height="3.5" fill="#8c5a36"/><rect x="2450" y="928.75" width="42" height="3.5" fill="#4f5e48"/><rect x="2492" y="928.75" width="2" height="3.5" fill="#8c5a36"/><rect x="2416" y="366" width="100" height="140" fill="#ffffff" opacity="0.09"/><rect x="28" y="247" width="2" height="12.699999999999989" fill="#afb1b3"/><rect x="28" y="1105" width="2" height="12.599999999999909" fill="#afb1b3"/><rect x="28" y="1445.5" width="2" height="12.099999999999909" fill="#afb1b3"/></svg>
</div></body></html>
